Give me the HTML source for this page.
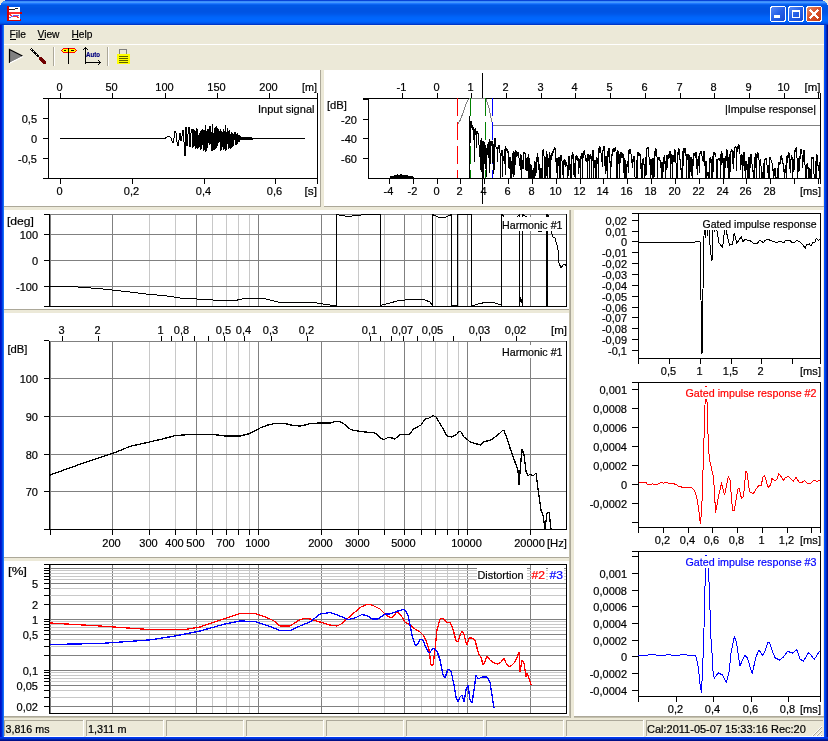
<!DOCTYPE html>
<html><head><meta charset="utf-8"><style>
html,body{margin:0;padding:0;width:828px;height:741px;overflow:hidden;background:#ECE9D8;}
svg{display:block;font-family:"Liberation Sans",sans-serif;will-change:transform;}
</style></head><body>
<svg width="828" height="741" viewBox="0 0 828 741" shape-rendering="crispEdges">
<defs>
<linearGradient id="btnBlue" x1="0" y1="0" x2="1" y2="1">
<stop offset="0" stop-color="#5A8CF8"/><stop offset="0.5" stop-color="#2660E8"/><stop offset="1" stop-color="#1848D0"/></linearGradient>
<linearGradient id="btnRed" x1="0" y1="0" x2="1" y2="1">
<stop offset="0" stop-color="#E8906A"/><stop offset="0.5" stop-color="#D8502A"/><stop offset="1" stop-color="#C03810"/></linearGradient>
</defs>
<rect x="0" y="0" width="828" height="1" fill="#0843D8" />
<rect x="0" y="1" width="828" height="1" fill="#3C8EF9" />
<rect x="0" y="2" width="828" height="1" fill="#4598FF" />
<rect x="0" y="3" width="828" height="1" fill="#1F78FF" />
<rect x="0" y="4" width="828" height="1" fill="#0A63F0" />
<rect x="0" y="5" width="828" height="1" fill="#0058E6" />
<rect x="0" y="6" width="828" height="1" fill="#0058E6" />
<rect x="0" y="7" width="828" height="1" fill="#0056E4" />
<rect x="0" y="8" width="828" height="1" fill="#0054E3" />
<rect x="0" y="9" width="828" height="1" fill="#0054E3" />
<rect x="0" y="10" width="828" height="1" fill="#0054E3" />
<rect x="0" y="11" width="828" height="1" fill="#0054E3" />
<rect x="0" y="12" width="828" height="1" fill="#0055E5" />
<rect x="0" y="13" width="828" height="1" fill="#0057E8" />
<rect x="0" y="14" width="828" height="1" fill="#005AEC" />
<rect x="0" y="15" width="828" height="1" fill="#005EF2" />
<rect x="0" y="16" width="828" height="1" fill="#0062F6" />
<rect x="0" y="17" width="828" height="1" fill="#0065FA" />
<rect x="0" y="18" width="828" height="1" fill="#0066FC" />
<rect x="0" y="19" width="828" height="1" fill="#0066FF" />
<rect x="0" y="20" width="828" height="1" fill="#0066FF" />
<rect x="0" y="21" width="828" height="1" fill="#0064FC" />
<rect x="0" y="22" width="828" height="1" fill="#005CF4" />
<rect x="0" y="23" width="828" height="1" fill="#0050E6" />
<rect x="0" y="24" width="828" height="1" fill="#0038C8" />
<rect x="0" y="25" width="1" height="716" fill="#0010C8" />
<rect x="1" y="25" width="1" height="716" fill="#0020D0" />
<rect x="2" y="25" width="1" height="716" fill="#0048E8" />
<rect x="3" y="25" width="1" height="716" fill="#1A70F8" />
<rect x="824" y="25" width="1" height="716" fill="#0050FF" />
<rect x="825" y="25" width="1" height="716" fill="#0040E0" />
<rect x="826" y="25" width="1" height="716" fill="#0028B8" />
<rect x="827" y="25" width="1" height="716" fill="#001090" />
<rect x="0" y="737" width="828" height="1" fill="#0038F0" />
<rect x="0" y="738" width="828" height="1" fill="#0034D8" />
<rect x="0" y="739" width="828" height="1" fill="#0020A8" />
<rect x="0" y="740" width="828" height="1" fill="#001088" />
<rect x="4" y="25" width="820" height="712" fill="#ECE9D8" />
<rect x="4" y="25" width="820" height="1" fill="#F4F1E4" />
<rect x="4" y="44" width="820" height="1" fill="#FFFFFF" />
<rect x="0" y="0" width="5" height="1" fill="#ECE9D8" />
<rect x="823" y="0" width="5" height="1" fill="#ECE9D8" />
<rect x="0" y="1" width="3" height="1" fill="#ECE9D8" />
<rect x="825" y="1" width="3" height="1" fill="#ECE9D8" />
<rect x="0" y="2" width="2" height="1" fill="#ECE9D8" />
<rect x="826" y="2" width="2" height="1" fill="#ECE9D8" />
<rect x="0" y="3" width="1" height="1" fill="#ECE9D8" />
<rect x="827" y="3" width="1" height="1" fill="#ECE9D8" />
<rect x="0" y="4" width="1" height="1" fill="#ECE9D8" />
<rect x="827" y="4" width="1" height="1" fill="#ECE9D8" />
<g>
<rect x="7" y="7" width="13" height="13" fill="#FFFFFF"/>
<path d="M9 10 L12 9 L15 9 L18 8" stroke="#202020" stroke-width="1" fill="none"/>
<rect x="7" y="12" width="14" height="2" fill="#FF3030"/>
<path d="M9 14 L13 17 L16 16 L19 18" stroke="#FF3030" stroke-width="1" fill="none"/>
<path d="M9 18 L13 16 L19 15" stroke="#6060FF" stroke-width="1" fill="none"/>
<rect x="7" y="6" width="1.5" height="15" fill="#D00000"/>
<rect x="7" y="19.5" width="14" height="1.5" fill="#D00000"/>
<circle cx="7.5" cy="6.8" r="1" fill="#D00000"/><circle cx="7.5" cy="13" r="1" fill="#D00000"/>
<circle cx="7.5" cy="20.2" r="1" fill="#D00000"/><circle cx="20.6" cy="20.2" r="1" fill="#D00000"/>
<circle cx="21" cy="13" r="1" fill="#D00000"/>
</g>
<rect x="770.5" y="6.5" width="15" height="15" rx="2.5" ry="2.5" fill="url(#btnBlue)" stroke="#FFFFFF" stroke-width="1"/>
<rect x="774" y="15" width="6" height="3" fill="#FFFFFF" />
<rect x="788.5" y="6.5" width="15" height="15" rx="2.5" ry="2.5" fill="url(#btnBlue)" stroke="#FFFFFF" stroke-width="1"/>
<rect x="792.5" y="10.5" width="7" height="7" fill="none" stroke="#FFFFFF" stroke-width="1"/>
<rect x="792" y="10" width="8" height="2" fill="#FFFFFF" />
<rect x="806.5" y="6.5" width="15" height="15" rx="2.5" ry="2.5" fill="url(#btnRed)" stroke="#FFFFFF" stroke-width="1"/>
<path d="M810.5 10.5 L817.5 17.5 M817.5 10.5 L810.5 17.5" stroke="#FFFFFF" stroke-width="2" stroke-linecap="square"/>
<text x="9.5" y="38" text-anchor="start" fill="#000" stroke="#000" stroke-width="0.2" font-size="11"  textLength="16.5" lengthAdjust="spacingAndGlyphs">File</text>
<text x="37.5" y="38" text-anchor="start" fill="#000" stroke="#000" stroke-width="0.2" font-size="11"  textLength="22" lengthAdjust="spacingAndGlyphs">View</text>
<text x="71.5" y="38" text-anchor="start" fill="#000" stroke="#000" stroke-width="0.2" font-size="11"  textLength="21" lengthAdjust="spacingAndGlyphs">Help</text>
<rect x="10" y="39" width="6" height="1" fill="#000"/>
<rect x="38" y="39" width="7" height="1" fill="#000"/>
<rect x="72" y="39" width="7" height="1" fill="#000"/>
<path d="M9.5 49.5 L22.5 56 L9.5 62.5 Z" fill="#808080"/>
<path d="M9.5 63 L9.5 49.5 L22.5 56" stroke="#000" stroke-width="1.2" fill="none" shape-rendering="auto"/>
<path d="M10 63 L23 56.5" stroke="#FFFFFF" stroke-width="1.2" shape-rendering="auto"/>
<path d="M31 49 L39 57" stroke="#000" stroke-width="2"/>
<path d="M31.5 49.5 L38.5 56.5" stroke="#FFFFFF" stroke-width="1" stroke-dasharray="1 1.2"/>
<path d="M40 58 L45 63" stroke="#700000" stroke-width="3" stroke-linecap="round"/>
<rect x="53" y="47" width="1" height="19" fill="#ACA899"/>
<rect x="54" y="47" width="1" height="19" fill="#FFFFFF"/>
<path d="M61.5 50.5 L63.5 48.5 L74.5 48.5 L76.5 50.5 L74.5 52.5 L63.5 52.5 Z" fill="#FFFF00" stroke="#FF0000" stroke-width="1"/>
<rect x="64" y="50" width="2" height="1" fill="#000" />
<rect x="71" y="50" width="3" height="1" fill="#000" />
<rect x="68" y="48" width="1" height="16" fill="#000"/>
<rect x="85" y="48" width="1" height="16" fill="#000"/>
<rect x="85" y="62" width="16" height="1" fill="#000"/>
<path d="M83 50 L85.5 47.5 L88 50" stroke="#000" fill="none"/>
<path d="M98 60 L100.5 62.5 L98 65" stroke="#000" fill="none"/>
<text x="86" y="57" text-anchor="start" fill="#000080" stroke="#000080" stroke-width="0.2" font-size="7" font-weight="bold" textLength="14" lengthAdjust="spacingAndGlyphs">Auto</text>
<rect x="107" y="47" width="1" height="19" fill="#ACA899"/>
<rect x="108" y="47" width="1" height="19" fill="#FFFFFF"/>
<path d="M119.5 54 L119.5 49.5 L126.5 49.5 L126.5 54" stroke="#808080" stroke-width="1.5" fill="none"/>
<rect x="117" y="54" width="13" height="10" fill="#FFFF00" />
<rect x="119" y="56" width="9" height="1" fill="#606000"/>
<rect x="119" y="58" width="9" height="1" fill="#606000"/>
<rect x="119" y="60" width="9" height="1" fill="#606000"/>
<rect x="119" y="62" width="9" height="1" fill="#606000"/>
<rect x="4" y="70" width="316" height="136" fill="#FFFFFF" />
<rect x="320" y="70" width="1" height="137" fill="#ACA899"/>
<rect x="4" y="206" width="317" height="1" fill="#ACA899"/>
<rect x="324" y="70" width="499" height="136" fill="#FFFFFF" />
<rect x="324" y="206" width="500" height="1" fill="#ACA899"/>
<rect x="4" y="210" width="565" height="99" fill="#FFFFFF" />
<rect x="4" y="309" width="567" height="1" fill="#ACA899"/>
<rect x="4" y="313" width="565" height="244" fill="#FFFFFF" />
<rect x="4" y="557" width="567" height="1" fill="#ACA899"/>
<rect x="4" y="561" width="565" height="155" fill="#FFFFFF" />
<rect x="4" y="716" width="567" height="1" fill="#ACA899"/>
<rect x="4" y="717" width="567" height="1" fill="#C4C0AC"/>
<rect x="569" y="210" width="1" height="508" fill="#C4C0AC"/>
<rect x="570" y="210" width="1" height="508" fill="#ACA899"/>
<rect x="574" y="210" width="249" height="506" fill="#FFFFFF" />
<rect x="574" y="716" width="250" height="1" fill="#ACA899"/>
<rect x="574" y="717" width="250" height="1" fill="#C4C0AC"/>
<rect x="4" y="720" width="79" height="1" fill="#ACA899"/>
<rect x="4" y="720" width="1" height="16" fill="#ACA899"/>
<rect x="83" y="720" width="1" height="17" fill="#FFFFFF"/>
<rect x="4" y="736" width="80" height="1" fill="#FFFFFF"/>
<rect x="86" y="720" width="77" height="1" fill="#ACA899"/>
<rect x="86" y="720" width="1" height="16" fill="#ACA899"/>
<rect x="163" y="720" width="1" height="17" fill="#FFFFFF"/>
<rect x="86" y="736" width="78" height="1" fill="#FFFFFF"/>
<rect x="166" y="720" width="77" height="1" fill="#ACA899"/>
<rect x="166" y="720" width="1" height="16" fill="#ACA899"/>
<rect x="243" y="720" width="1" height="17" fill="#FFFFFF"/>
<rect x="166" y="736" width="78" height="1" fill="#FFFFFF"/>
<rect x="246" y="720" width="77" height="1" fill="#ACA899"/>
<rect x="246" y="720" width="1" height="16" fill="#ACA899"/>
<rect x="323" y="720" width="1" height="17" fill="#FFFFFF"/>
<rect x="246" y="736" width="78" height="1" fill="#FFFFFF"/>
<rect x="326" y="720" width="77" height="1" fill="#ACA899"/>
<rect x="326" y="720" width="1" height="16" fill="#ACA899"/>
<rect x="403" y="720" width="1" height="17" fill="#FFFFFF"/>
<rect x="326" y="736" width="78" height="1" fill="#FFFFFF"/>
<rect x="406" y="720" width="77" height="1" fill="#ACA899"/>
<rect x="406" y="720" width="1" height="16" fill="#ACA899"/>
<rect x="483" y="720" width="1" height="17" fill="#FFFFFF"/>
<rect x="406" y="736" width="78" height="1" fill="#FFFFFF"/>
<rect x="486" y="720" width="77" height="1" fill="#ACA899"/>
<rect x="486" y="720" width="1" height="16" fill="#ACA899"/>
<rect x="563" y="720" width="1" height="17" fill="#FFFFFF"/>
<rect x="486" y="736" width="78" height="1" fill="#FFFFFF"/>
<rect x="566" y="720" width="77" height="1" fill="#ACA899"/>
<rect x="566" y="720" width="1" height="16" fill="#ACA899"/>
<rect x="643" y="720" width="1" height="17" fill="#FFFFFF"/>
<rect x="566" y="736" width="78" height="1" fill="#FFFFFF"/>
<rect x="646" y="720" width="177" height="1" fill="#ACA899"/>
<rect x="646" y="720" width="1" height="16" fill="#ACA899"/>
<rect x="646" y="736" width="178" height="1" fill="#FFFFFF"/>
<text x="5.5" y="733" text-anchor="start" fill="#000" stroke="#000" stroke-width="0.2" font-size="11"  textLength="44" lengthAdjust="spacingAndGlyphs">3,816 ms</text>
<text x="88" y="733" text-anchor="start" fill="#000" stroke="#000" stroke-width="0.2" font-size="11"  textLength="38.5" lengthAdjust="spacingAndGlyphs">1,311 m</text>
<text x="647" y="733" text-anchor="start" fill="#000" stroke="#000" stroke-width="0.2" font-size="11" >Cal:2011-05-07 15:33:16 Rec:20</text>
<path d="M812 736 L822 726" stroke="#FFFFFF" stroke-width="1"/>
<path d="M813 736 L822 727" stroke="#ACA899" stroke-width="1.2"/>
<path d="M816 736 L822 730" stroke="#FFFFFF" stroke-width="1"/>
<path d="M817 736 L822 731" stroke="#ACA899" stroke-width="1.2"/>
<path d="M820 736 L822 734" stroke="#FFFFFF" stroke-width="1"/>
<path d="M821 736 L822 735" stroke="#ACA899" stroke-width="1.2"/>
<rect x="48" y="98" width="1" height="81" fill="#000"/>
<rect x="43" y="98" width="275" height="1" fill="#000"/>
<rect x="43" y="178" width="275" height="1" fill="#000"/>
<rect x="317" y="93" width="1" height="91" fill="#000"/>
<rect x="43" y="118" width="5" height="1" fill="#000"/>
<rect x="43" y="138" width="5" height="1" fill="#000"/>
<rect x="43" y="158" width="5" height="1" fill="#000"/>
<text x="37" y="123" text-anchor="end" fill="#000" stroke="#000" stroke-width="0.2" font-size="11" >0,5</text>
<text x="37" y="143" text-anchor="end" fill="#000" stroke="#000" stroke-width="0.2" font-size="11" >0</text>
<text x="37" y="163" text-anchor="end" fill="#000" stroke="#000" stroke-width="0.2" font-size="11" >-0,5</text>
<rect x="60" y="93" width="1" height="5" fill="#000"/>
<text x="59.5" y="91" text-anchor="middle" fill="#000" stroke="#000" stroke-width="0.2" font-size="11" >0</text>
<rect x="112" y="93" width="1" height="5" fill="#000"/>
<text x="111.5" y="91" text-anchor="middle" fill="#000" stroke="#000" stroke-width="0.2" font-size="11" >50</text>
<rect x="165" y="93" width="1" height="5" fill="#000"/>
<text x="164.5" y="91" text-anchor="middle" fill="#000" stroke="#000" stroke-width="0.2" font-size="11" >100</text>
<rect x="217" y="93" width="1" height="5" fill="#000"/>
<text x="216.5" y="91" text-anchor="middle" fill="#000" stroke="#000" stroke-width="0.2" font-size="11" >150</text>
<rect x="269" y="93" width="1" height="5" fill="#000"/>
<text x="268.5" y="91" text-anchor="middle" fill="#000" stroke="#000" stroke-width="0.2" font-size="11" >200</text>
<text x="317" y="91" text-anchor="end" fill="#000" stroke="#000" stroke-width="0.2" font-size="11"  textLength="15" lengthAdjust="spacingAndGlyphs">[m]</text>
<rect x="60" y="179" width="1" height="5" fill="#000"/>
<text x="59.5" y="195" text-anchor="middle" fill="#000" stroke="#000" stroke-width="0.2" font-size="11" >0</text>
<rect x="132" y="179" width="1" height="5" fill="#000"/>
<text x="131.5" y="195" text-anchor="middle" fill="#000" stroke="#000" stroke-width="0.2" font-size="11" >0,2</text>
<rect x="204" y="179" width="1" height="5" fill="#000"/>
<text x="203.5" y="195" text-anchor="middle" fill="#000" stroke="#000" stroke-width="0.2" font-size="11" >0,4</text>
<rect x="275" y="179" width="1" height="5" fill="#000"/>
<text x="274.5" y="195" text-anchor="middle" fill="#000" stroke="#000" stroke-width="0.2" font-size="11" >0,6</text>
<text x="317" y="195" text-anchor="end" fill="#000" stroke="#000" stroke-width="0.2" font-size="11"  textLength="12.5" lengthAdjust="spacingAndGlyphs">[s]</text>
<text x="314.5" y="113" text-anchor="end" fill="#000" stroke="#000" stroke-width="0.2" font-size="11"  textLength="56.5" lengthAdjust="spacingAndGlyphs">Input signal</text>
<rect x="368" y="98" width="1" height="81" fill="#000"/>
<rect x="368" y="98" width="453" height="1" fill="#000"/>
<rect x="368" y="178" width="453" height="1" fill="#000"/>
<rect x="820" y="93" width="1" height="91" fill="#000"/>
<rect x="363" y="98" width="5" height="2" fill="#000" />
<rect x="363" y="119" width="5" height="1" fill="#000"/>
<rect x="363" y="138" width="5" height="1" fill="#000"/>
<rect x="363" y="158" width="5" height="1" fill="#000"/>
<text x="357" y="124" text-anchor="end" fill="#000" stroke="#000" stroke-width="0.2" font-size="11" >-20</text>
<text x="357" y="143" text-anchor="end" fill="#000" stroke="#000" stroke-width="0.2" font-size="11" >-40</text>
<text x="357" y="163" text-anchor="end" fill="#000" stroke="#000" stroke-width="0.2" font-size="11" >-60</text>
<text x="327" y="109" text-anchor="start" fill="#000" stroke="#000" stroke-width="0.2" font-size="11"  textLength="20" lengthAdjust="spacingAndGlyphs">[dB]</text>
<rect x="402" y="93" width="1" height="5" fill="#000"/>
<text x="401.5" y="91" text-anchor="middle" fill="#000" stroke="#000" stroke-width="0.2" font-size="11" >-1</text>
<rect x="437" y="93" width="1" height="5" fill="#000"/>
<text x="436.5" y="91" text-anchor="middle" fill="#000" stroke="#000" stroke-width="0.2" font-size="11" >0</text>
<rect x="471" y="93" width="1" height="5" fill="#000"/>
<text x="470.5" y="91" text-anchor="middle" fill="#000" stroke="#000" stroke-width="0.2" font-size="11" >1</text>
<rect x="506" y="93" width="1" height="5" fill="#000"/>
<text x="505.5" y="91" text-anchor="middle" fill="#000" stroke="#000" stroke-width="0.2" font-size="11" >2</text>
<rect x="541" y="93" width="1" height="5" fill="#000"/>
<text x="540.5" y="91" text-anchor="middle" fill="#000" stroke="#000" stroke-width="0.2" font-size="11" >3</text>
<rect x="575" y="93" width="1" height="5" fill="#000"/>
<text x="574.5" y="91" text-anchor="middle" fill="#000" stroke="#000" stroke-width="0.2" font-size="11" >4</text>
<rect x="610" y="93" width="1" height="5" fill="#000"/>
<text x="609.5" y="91" text-anchor="middle" fill="#000" stroke="#000" stroke-width="0.2" font-size="11" >5</text>
<rect x="645" y="93" width="1" height="5" fill="#000"/>
<text x="644.5" y="91" text-anchor="middle" fill="#000" stroke="#000" stroke-width="0.2" font-size="11" >6</text>
<rect x="680" y="93" width="1" height="5" fill="#000"/>
<text x="679.5" y="91" text-anchor="middle" fill="#000" stroke="#000" stroke-width="0.2" font-size="11" >7</text>
<rect x="714" y="93" width="1" height="5" fill="#000"/>
<text x="713.5" y="91" text-anchor="middle" fill="#000" stroke="#000" stroke-width="0.2" font-size="11" >8</text>
<rect x="749" y="93" width="1" height="5" fill="#000"/>
<text x="748.5" y="91" text-anchor="middle" fill="#000" stroke="#000" stroke-width="0.2" font-size="11" >9</text>
<rect x="784" y="93" width="1" height="5" fill="#000"/>
<text x="783.5" y="91" text-anchor="middle" fill="#000" stroke="#000" stroke-width="0.2" font-size="11" >10</text>
<text x="820.5" y="91" text-anchor="end" fill="#000" stroke="#000" stroke-width="0.2" font-size="11"  textLength="16" lengthAdjust="spacingAndGlyphs">[m]</text>
<rect x="389" y="179" width="1" height="5" fill="#000"/>
<text x="388.5" y="195" text-anchor="middle" fill="#000" stroke="#000" stroke-width="0.2" font-size="11" >-4</text>
<rect x="413" y="179" width="1" height="5" fill="#000"/>
<text x="412.5" y="195" text-anchor="middle" fill="#000" stroke="#000" stroke-width="0.2" font-size="11" >-2</text>
<rect x="437" y="179" width="1" height="5" fill="#000"/>
<text x="436.5" y="195" text-anchor="middle" fill="#000" stroke="#000" stroke-width="0.2" font-size="11" >0</text>
<rect x="460" y="179" width="1" height="5" fill="#000"/>
<text x="459.5" y="195" text-anchor="middle" fill="#000" stroke="#000" stroke-width="0.2" font-size="11" >2</text>
<rect x="484" y="179" width="1" height="5" fill="#000"/>
<text x="483.5" y="195" text-anchor="middle" fill="#000" stroke="#000" stroke-width="0.2" font-size="11" >4</text>
<rect x="508" y="179" width="1" height="5" fill="#000"/>
<text x="507.5" y="195" text-anchor="middle" fill="#000" stroke="#000" stroke-width="0.2" font-size="11" >6</text>
<rect x="532" y="179" width="1" height="5" fill="#000"/>
<text x="531.5" y="195" text-anchor="middle" fill="#000" stroke="#000" stroke-width="0.2" font-size="11" >8</text>
<rect x="556" y="179" width="1" height="5" fill="#000"/>
<text x="555.5" y="195" text-anchor="middle" fill="#000" stroke="#000" stroke-width="0.2" font-size="11" >10</text>
<rect x="580" y="179" width="1" height="5" fill="#000"/>
<text x="579.5" y="195" text-anchor="middle" fill="#000" stroke="#000" stroke-width="0.2" font-size="11" >12</text>
<rect x="603" y="179" width="1" height="5" fill="#000"/>
<text x="602.5" y="195" text-anchor="middle" fill="#000" stroke="#000" stroke-width="0.2" font-size="11" >14</text>
<rect x="627" y="179" width="1" height="5" fill="#000"/>
<text x="626.5" y="195" text-anchor="middle" fill="#000" stroke="#000" stroke-width="0.2" font-size="11" >16</text>
<rect x="651" y="179" width="1" height="5" fill="#000"/>
<text x="650.5" y="195" text-anchor="middle" fill="#000" stroke="#000" stroke-width="0.2" font-size="11" >18</text>
<rect x="675" y="179" width="1" height="5" fill="#000"/>
<text x="674.5" y="195" text-anchor="middle" fill="#000" stroke="#000" stroke-width="0.2" font-size="11" >20</text>
<rect x="699" y="179" width="1" height="5" fill="#000"/>
<text x="698.5" y="195" text-anchor="middle" fill="#000" stroke="#000" stroke-width="0.2" font-size="11" >22</text>
<rect x="723" y="179" width="1" height="5" fill="#000"/>
<text x="722.5" y="195" text-anchor="middle" fill="#000" stroke="#000" stroke-width="0.2" font-size="11" >24</text>
<rect x="746" y="179" width="1" height="5" fill="#000"/>
<text x="745.5" y="195" text-anchor="middle" fill="#000" stroke="#000" stroke-width="0.2" font-size="11" >26</text>
<rect x="770" y="179" width="1" height="5" fill="#000"/>
<text x="769.5" y="195" text-anchor="middle" fill="#000" stroke="#000" stroke-width="0.2" font-size="11" >28</text>
<rect x="794" y="179" width="1" height="5" fill="#000"/>
<rect x="818" y="179" width="1" height="5" fill="#000"/>
<rect x="818" y="93" width="1" height="5" fill="#000"/>
<text x="821" y="195" text-anchor="end" fill="#000" stroke="#000" stroke-width="0.2" font-size="11"  textLength="21" lengthAdjust="spacingAndGlyphs">[ms]</text>
<polyline points="60.00,138.50 165.00,138.50 167.00,137.00 169.00,136.00 171.00,138.00 172.00,141.00 173.00,143.00 174.00,138.00 175.00,131.00 176.00,133.00 177.00,142.00 178.00,146.00 179.00,140.00 180.00,133.00 181.00,141.00 182.00,136.00 183.00,130.00 184.00,142.00 185.00,156.00 185.50,140.00 186.00,127.00 187.00,146.00 188.00,134.00 189.00,127.00 190.00,147.00 191.00,133.00 192.00,129.00 193.00,148.00 193.50,129.67 194.00,145.96 194.50,130.24 195.00,145.53 195.50,131.88 196.00,149.22 196.50,128.51 197.00,143.33 197.50,129.25 198.00,148.72 198.50,135.02 199.00,147.13 199.50,133.39 200.00,147.18 200.50,131.32 201.00,149.70 201.50,130.77 202.00,143.47 202.50,129.18 203.00,145.19 203.50,130.13 204.00,151.25 204.50,130.69 205.00,147.41 205.50,125.62 206.00,151.92 206.50,131.89 207.00,148.76 207.50,129.97 208.00,143.87 208.50,129.91 209.00,143.27 209.50,126.43 210.00,144.86 210.50,126.91 211.00,143.03 211.50,132.07 212.00,151.38 212.50,124.49 213.00,150.66 213.50,133.30 214.00,148.84 214.50,128.86 215.00,149.96 215.50,127.54 216.00,149.21 216.50,126.04 217.00,147.22 217.50,128.38 218.00,143.33 218.50,129.52 219.00,142.97 219.50,131.77 220.00,142.11 220.50,129.39 221.00,150.62 221.50,131.82 222.00,142.44 222.50,132.43 223.00,147.18 223.50,129.91 224.00,150.19 224.50,131.43 225.00,147.06 225.50,125.49 226.00,150.64 226.50,132.40 227.00,141.84 227.50,128.68 228.00,143.95 228.50,131.47 229.00,149.03 229.50,130.89 230.00,143.85 230.50,134.57 231.00,148.57 231.50,132.70 232.00,148.15 232.50,133.41 233.00,146.31 233.50,134.63 234.00,140.80 234.50,132.39 235.00,140.39 235.50,132.28 236.00,144.98 236.50,134.29 237.00,144.23 237.50,133.78 238.00,142.43 238.50,135.61 239.00,142.39 239.50,135.27 240.00,139.63 240.50,136.32 241.00,139.00 241.50,137.30 242.00,139.70 242.50,137.30 243.00,139.70 243.50,137.30 244.00,139.70 244.50,137.30 245.00,139.70 245.50,137.30 246.00,139.70 246.50,137.30 247.00,139.70 247.50,137.30 248.00,139.70 248.50,137.30 249.00,139.70 249.50,137.30 250.00,139.70 250.50,137.30 251.00,139.70 251.50,137.30 252.00,139.70 252.00,138.50 305.00,138.50" fill="none" stroke="#000" stroke-width="1" stroke-linejoin="round" shape-rendering="crispEdges"/>
<polygon points="390.00,178.00 390.00,176.94 390.50,176.96 391.00,177.29 391.50,176.63 392.00,176.58 392.50,176.57 393.00,175.98 393.50,176.28 394.00,176.32 394.50,176.43 395.00,175.50 395.50,175.67 396.00,175.34 396.50,176.13 397.00,175.92 397.50,175.08 398.00,176.16 398.50,176.09 399.00,175.68 399.50,175.60 400.00,175.02 400.50,174.83 401.00,175.44 401.50,174.87 402.00,175.03 402.50,175.11 403.00,174.87 403.50,175.42 404.00,175.42 404.50,175.94 405.00,175.60 405.50,175.80 406.00,175.69 406.50,175.95 407.00,175.78 407.50,175.64 408.00,176.59 408.50,176.67 409.00,176.58 409.50,176.51 410.00,176.14 410.50,176.14 411.00,176.32 411.50,176.16 412.00,177.10 412.50,176.77 413.00,177.42 413.00,178.00" fill="#000" stroke="#000" stroke-width="1" shape-rendering="crispEdges"/>
<polyline points="457.00,125.50 458.00,124.00 460.00,120.50 463.00,113.00 466.00,104.00 468.50,99.50 470.00,98.50 485.00,98.50 486.50,100.00 489.00,108.00 491.00,118.00 492.50,124.50 493.00,125.50 820.00,125.50" fill="none" stroke="#808080" stroke-width="1" stroke-linejoin="round" shape-rendering="crispEdges"/>
<line x1="457.5" y1="98" x2="457.5" y2="178" stroke="#FF0000" stroke-width="1" stroke-dasharray="18 6"/>
<line x1="470.5" y1="98" x2="470.5" y2="178" stroke="#008000" stroke-width="1" stroke-dasharray="18 6"/>
<line x1="485.5" y1="98" x2="485.5" y2="178" stroke="#008000" stroke-width="1" stroke-dasharray="18 6"/>
<line x1="492.5" y1="98" x2="492.5" y2="178" stroke="#0000FF" stroke-width="1" stroke-dasharray="18 6"/>
<polyline points="469.00,178.00 469.00,120.00 469.00,116.04 469.25,138.62 469.50,124.18 469.75,129.25 470.00,135.52 470.25,142.47 470.50,124.83 470.75,131.44 471.00,120.84 471.25,123.23 471.50,121.47 471.75,127.42 472.00,127.63 472.25,129.53 472.50,125.50 472.75,126.58 473.00,126.36 473.25,130.95 473.50,132.52 473.75,137.06 474.00,140.32 474.25,161.67 474.50,132.28 474.75,143.50 475.00,128.63 475.25,130.45 475.50,128.94 475.75,132.54 476.00,134.59 476.25,144.51 476.50,136.34 476.75,147.12 477.00,130.87 477.25,133.42 477.50,131.27 477.75,133.00 478.00,133.41 478.25,134.78 478.50,135.66 478.75,141.55 479.00,144.60 479.25,148.37 479.50,146.37 479.75,151.04 480.00,156.96 480.25,170.03 480.50,147.72 480.75,151.80 481.00,140.24 481.25,171.76 481.50,138.35 481.75,139.00 482.00,140.22 482.25,152.81 482.50,158.81 482.75,178.00 483.00,163.47 483.25,176.73 483.50,149.72 483.75,178.00 484.00,141.45 484.25,145.56 484.50,142.56 484.75,163.37 485.00,144.93 485.25,149.66 485.50,148.61 485.75,168.57 486.00,147.46 486.25,149.75 486.50,153.10 486.75,176.89 487.00,148.62 487.25,155.04 487.50,145.64 487.75,148.02 488.00,144.21 488.25,145.37 488.50,147.10 488.75,157.67 489.00,142.35 489.25,172.86 489.50,139.33 489.75,140.33 490.00,140.57 490.25,149.80 490.50,144.47 490.75,163.92 491.00,143.31 491.25,145.28 491.50,141.87 491.75,145.81 492.00,140.77 492.25,144.04 492.50,147.51 492.75,160.39 493.00,163.35 493.25,173.59 493.50,158.21 493.75,163.09 494.00,143.75 494.25,169.72 494.50,138.11 494.75,141.13 495.00,138.29 495.25,140.83 495.50,141.90 495.75,145.33 496.00,146.50 496.25,148.12 496.50,147.72 496.75,148.14 497.00,147.28 497.25,149.28 497.50,152.33 497.75,161.97 498.00,147.11 498.25,148.88 498.50,146.92 498.75,148.18 499.00,145.05 499.25,145.98 499.50,146.03 499.75,150.88 500.00,153.29 500.25,163.13 500.50,157.29 500.75,178.00 501.00,153.19 501.25,154.52 501.50,154.51 501.75,155.23 502.00,150.12 502.25,153.14 502.50,151.18 502.75,176.91 503.00,155.64 503.25,160.49 503.50,156.25 503.75,160.12 504.00,156.23 504.25,160.37 504.50,155.52 504.75,163.20 505.00,149.15 505.25,174.50 505.50,146.49 505.75,147.37 506.00,148.11 506.25,150.59 506.50,148.93 506.75,150.35 507.00,149.03 507.25,151.49 507.50,151.25 507.75,152.49 508.00,150.69 508.25,153.11 508.50,155.69 508.75,167.31 509.00,161.98 509.25,169.07 509.50,157.56 509.75,159.44 510.00,159.31 510.25,178.00 510.50,157.92 510.75,167.54 511.00,168.04 511.25,178.00 511.50,176.13 511.75,178.00 512.00,160.94 512.25,174.06 512.50,153.92 512.75,157.74 513.00,154.88 513.25,176.49 513.50,166.91 513.75,175.64 514.00,151.35 514.25,160.93 514.50,152.01 514.75,174.58 515.00,153.67 515.25,164.70 515.50,150.92 515.75,152.60 516.00,150.85 516.25,153.87 516.50,155.38 516.75,156.24 517.00,155.46 517.25,155.66 517.50,152.58 517.75,154.85 518.00,152.42 518.25,153.93 518.50,154.57 518.75,156.87 519.00,158.20 519.25,160.85 519.50,160.75 519.75,163.77 520.00,166.03 520.25,169.77 520.50,154.42 520.75,161.64 521.00,154.20 521.25,163.13 521.50,159.49 521.75,178.00 522.00,159.46 522.25,163.74 522.50,165.28 522.75,168.81 523.00,162.17 523.25,169.00 523.50,153.98 523.75,159.51 524.00,152.11 524.25,152.93 524.50,152.67 524.75,153.16 525.00,152.70 525.25,154.04 525.50,156.06 525.75,170.02 526.00,158.05 526.25,161.07 526.50,158.56 526.75,171.07 527.00,158.21 527.25,164.63 527.50,166.14 527.75,170.13 528.00,156.64 528.25,178.00 528.50,154.56 528.75,155.84 529.00,157.43 529.25,167.77 529.50,174.66 529.75,178.00 530.00,168.61 530.25,178.00 530.50,167.32 530.75,178.00 531.00,164.48 531.25,178.00 531.50,165.68 531.75,178.00 532.00,171.25 532.25,178.00 532.50,170.53 532.75,178.00 533.00,178.00 533.25,178.00 533.50,176.21 533.75,178.00 534.00,167.79 534.25,178.00 534.50,161.46 534.75,164.97 535.00,161.69 535.25,168.52 535.50,172.65 535.75,175.77 536.00,170.93 536.25,172.71 536.50,163.63 536.75,169.24 537.00,156.51 537.25,162.02 537.50,153.87 537.75,155.01 538.00,156.08 538.25,166.83 538.50,163.62 538.75,169.64 539.00,163.08 539.25,177.33 539.50,178.00 539.75,178.00 540.00,173.23 540.25,178.00 540.50,176.89 540.75,178.00 541.00,168.07 541.25,177.15 541.50,168.03 541.75,178.00 542.00,168.50 542.25,178.00 542.50,157.83 542.75,165.71 543.00,150.39 543.25,155.35 543.50,149.98 543.75,152.95 544.00,155.13 544.25,163.94 544.50,168.16 544.75,178.00 545.00,167.84 545.25,178.00 545.50,162.94 545.75,165.87 546.00,156.75 546.25,175.38 546.50,151.98 546.75,154.09 547.00,153.11 547.25,162.09 547.50,166.46 547.75,178.00 548.00,164.48 548.25,166.82 548.50,160.40 548.75,162.23 549.00,158.10 549.25,178.00 549.50,152.76 549.75,154.97 550.00,154.53 550.25,167.24 550.50,161.02 550.75,178.00 551.00,157.63 551.25,159.47 551.50,156.36 551.75,157.53 552.00,152.76 552.25,155.25 552.50,152.78 552.75,153.26 553.00,151.52 553.25,152.87 553.50,150.26 553.75,151.14 554.00,149.55 554.25,150.09 554.50,147.86 554.75,149.17 555.00,147.75 555.25,149.58 555.50,151.04 555.75,158.29 556.00,161.84 556.25,172.85 556.50,159.73 556.75,170.38 557.00,158.32 557.25,161.83 557.50,166.13 557.75,178.00 558.00,158.35 558.25,165.75 558.50,157.49 558.75,165.68 559.00,157.44 559.25,178.00 559.50,157.69 559.75,163.67 560.00,165.41 560.25,171.89 560.50,160.33 560.75,178.00 561.00,155.32 561.25,157.82 561.50,155.67 561.75,159.22 562.00,160.79 562.25,164.82 562.50,166.05 562.75,170.88 563.00,174.71 563.25,178.00 563.50,169.18 563.75,178.00 564.00,159.76 564.25,164.85 564.50,159.43 564.75,159.75 565.00,160.01 565.25,162.11 565.50,163.44 565.75,166.36 566.00,163.02 566.25,165.78 566.50,162.36 566.75,162.70 567.00,163.79 567.25,178.00 567.50,170.61 567.75,176.80 568.00,170.92 568.25,176.05 568.50,157.47 568.75,166.16 569.00,156.16 569.25,157.55 569.50,159.16 569.75,166.79 570.00,170.10 570.25,178.00 570.50,169.93 570.75,175.94 571.00,163.58 571.25,178.00 571.50,159.24 571.75,162.07 572.00,154.64 572.25,158.24 572.50,152.47 572.75,153.55 573.00,153.47 573.25,159.21 573.50,162.41 573.75,175.04 574.00,169.61 574.25,176.86 574.50,163.94 574.75,166.84 575.00,167.14 575.25,178.00 575.50,160.86 575.75,167.16 576.00,155.63 576.25,158.96 576.50,155.64 576.75,158.63 577.00,159.42 577.25,160.62 577.50,156.18 577.75,158.03 578.00,157.52 578.25,167.51 578.50,167.08 578.75,173.71 579.00,158.93 579.25,163.68 579.50,159.10 579.75,167.48 580.00,162.27 580.25,178.00 580.50,159.47 580.75,160.77 581.00,155.71 581.25,158.91 581.50,153.55 581.75,154.75 582.00,153.87 582.25,159.30 582.50,160.51 582.75,178.00 583.00,153.12 583.25,157.10 583.50,153.02 583.75,153.38 584.00,150.83 584.25,152.71 584.50,150.91 584.75,153.45 585.00,154.71 585.25,158.98 585.50,159.12 585.75,160.46 586.00,157.85 586.25,158.39 586.50,158.96 586.75,160.16 587.00,161.90 587.25,178.00 587.50,156.75 587.75,161.60 588.00,154.29 588.25,156.14 588.50,154.11 588.75,157.76 589.00,161.16 589.25,178.00 589.50,161.72 589.75,173.89 590.00,154.89 590.25,158.89 590.50,154.89 590.75,156.75 591.00,157.62 591.25,162.92 591.50,164.19 591.75,178.00 592.00,156.08 592.25,160.94 592.50,150.44 592.75,154.56 593.00,149.84 593.25,152.25 593.50,154.97 593.75,178.00 594.00,162.43 594.25,167.58 594.50,160.04 594.75,161.97 595.00,159.99 595.25,165.26 595.50,169.88 595.75,178.00 596.00,168.45 596.25,178.00 596.50,157.97 596.75,163.32 597.00,158.02 597.25,159.05 597.50,159.50 597.75,162.52 598.00,163.81 598.25,173.35 598.50,155.40 598.75,178.00 599.00,147.85 599.25,152.52 599.50,146.34 599.75,147.05 600.00,147.18 600.25,150.48 600.50,151.17 600.75,152.07 601.00,153.03 601.25,158.66 601.50,159.83 601.75,160.11 602.00,161.41 602.25,166.48 602.50,152.31 602.75,162.90 603.00,149.90 603.25,150.79 603.50,147.28 603.75,149.81 604.00,145.82 604.25,146.63 604.50,148.36 604.75,165.32 605.00,159.18 605.25,173.43 605.50,156.62 605.75,158.46 606.00,156.07 606.25,160.02 606.50,159.15 606.75,171.05 607.00,159.33 607.25,173.54 607.50,160.06 607.75,178.00 608.00,151.04 608.25,156.30 608.50,148.96 608.75,150.32 609.00,148.12 609.25,148.55 609.50,149.51 609.75,158.59 610.00,162.66 610.25,178.00 610.50,161.25 610.75,164.18 611.00,162.89 611.25,166.54 611.50,154.85 611.75,160.03 612.00,154.58 612.25,155.09 612.50,151.93 612.75,154.58 613.00,149.16 613.25,151.17 613.50,148.70 613.75,149.35 614.00,149.92 614.25,151.12 614.50,149.31 614.75,150.98 615.00,147.95 615.25,148.75 615.50,148.01 615.75,149.61 616.00,150.98 616.25,160.01 616.50,164.76 616.75,178.00 617.00,155.80 617.25,177.62 617.50,150.21 617.75,153.11 618.00,150.61 618.25,155.18 618.50,157.48 618.75,162.78 619.00,163.54 619.25,169.79 619.50,169.35 619.75,178.00 620.00,154.06 620.25,162.78 620.50,152.46 620.75,153.17 621.00,152.44 621.25,153.58 621.50,154.46 621.75,157.20 622.00,154.28 622.25,157.11 622.50,153.50 622.75,153.73 623.00,153.88 623.25,155.55 623.50,157.68 623.75,173.05 624.00,157.61 624.25,161.38 624.50,160.97 624.75,178.00 625.00,159.80 625.25,161.49 625.50,164.83 625.75,178.00 626.00,174.21 626.25,178.00 626.50,166.34 626.75,178.00 627.00,164.15 627.25,166.11 627.50,161.34 627.75,166.31 628.00,160.59 628.25,173.05 628.50,155.46 628.75,171.25 629.00,150.37 629.25,153.69 629.50,149.41 629.75,149.81 630.00,149.51 630.25,149.96 630.50,150.41 630.75,152.90 631.00,153.85 631.25,156.52 631.50,157.50 631.75,161.05 632.00,162.71 632.25,167.68 632.50,162.54 632.75,167.13 633.00,159.35 633.25,161.74 633.50,156.30 633.75,158.24 634.00,156.31 634.25,157.95 634.50,159.33 634.75,169.69 635.00,177.14 635.25,178.00 635.50,178.00 635.75,178.00 636.00,178.00 636.25,178.00 636.50,178.00 636.75,178.00 637.00,159.95 637.25,178.00 637.50,152.09 637.75,156.40 638.00,152.09 638.25,153.46 638.50,153.82 638.75,155.00 639.00,155.45 639.25,155.76 639.50,153.96 639.75,155.18 640.00,153.81 640.25,157.07 640.50,160.07 640.75,168.26 641.00,162.33 641.25,166.02 641.50,164.33 641.75,178.00 642.00,176.73 642.25,178.00 642.50,168.30 642.75,175.10 643.00,158.56 643.25,164.97 643.50,158.24 643.75,162.66 644.00,165.19 644.25,178.00 644.50,166.61 644.75,178.00 645.00,163.87 645.25,166.23 645.50,163.51 645.75,175.57 646.00,156.53 646.25,174.35 646.50,149.68 646.75,154.19 647.00,148.15 647.25,148.90 647.50,147.35 647.75,148.04 648.00,147.26 648.25,148.55 648.50,149.60 648.75,154.72 649.00,156.92 649.25,160.44 649.50,160.22 649.75,162.78 650.00,165.34 650.25,172.67 650.50,163.50 650.75,178.00 651.00,158.72 651.25,160.52 651.50,161.24 651.75,174.98 652.00,161.53 652.25,166.02 652.50,163.17 652.75,178.00 653.00,158.28 653.25,161.43 653.50,162.51 653.75,178.00 654.00,174.58 654.25,176.90 654.50,158.28 654.75,171.98 655.00,151.05 655.25,155.80 655.50,148.72 655.75,149.95 656.00,149.02 656.25,151.16 656.50,152.13 656.75,155.34 657.00,156.70 657.25,167.56 657.50,159.81 657.75,178.00 658.00,158.53 658.25,159.18 658.50,159.35 658.75,159.84 659.00,157.44 659.25,158.73 659.50,157.61 659.75,160.00 660.00,161.01 660.25,161.79 660.50,161.01 660.75,164.15 661.00,168.45 661.25,178.00 661.50,164.88 661.75,178.00 662.00,162.04 662.25,163.80 662.50,166.63 662.75,178.00 663.00,168.97 663.25,171.00 663.50,166.70 663.75,171.22 664.00,156.71 664.25,163.43 664.50,155.48 664.75,156.86 665.00,158.89 665.25,177.40 665.50,163.07 665.75,166.46 666.00,165.77 666.25,169.43 666.50,155.39 666.75,161.68 667.00,155.52 667.25,162.68 667.50,161.72 667.75,167.69 668.00,154.60 668.25,158.61 668.50,154.84 668.75,156.98 669.00,156.59 669.25,157.12 669.50,152.69 669.75,156.09 670.00,151.28 670.25,152.52 670.50,154.47 670.75,178.00 671.00,154.52 671.25,163.19 671.50,154.39 671.75,158.76 672.00,161.45 672.25,168.02 672.50,164.15 672.75,178.00 673.00,155.48 673.25,159.53 673.50,156.33 673.75,161.45 674.00,155.14 674.25,161.64 674.50,149.32 674.75,152.77 675.00,149.46 675.25,152.96 675.50,155.06 675.75,161.94 676.00,163.00 676.25,165.26 676.50,167.94 676.75,178.00 677.00,163.72 677.25,178.00 677.50,154.62 677.75,164.94 678.00,152.33 678.25,154.13 678.50,148.90 678.75,151.28 679.00,148.70 679.25,151.43 679.50,153.64 679.75,159.65 680.00,159.36 680.25,160.04 680.50,161.59 680.75,169.04 681.00,170.01 681.25,171.61 681.50,174.98 681.75,178.00 682.00,167.53 682.25,174.04 682.50,165.59 682.75,178.00 683.00,150.79 683.25,165.44 683.50,148.43 683.75,149.25 684.00,149.60 684.25,152.01 684.50,149.38 684.75,152.08 685.00,147.98 685.25,148.79 685.50,150.01 685.75,154.43 686.00,155.58 686.25,161.13 686.50,159.74 686.75,178.00 687.00,154.00 687.25,156.87 687.50,154.05 687.75,158.72 688.00,159.64 688.25,178.00 688.50,154.41 688.75,156.87 689.00,154.99 689.25,163.48 689.50,172.17 689.75,178.00 690.00,158.17 690.25,172.03 690.50,157.22 690.75,157.65 691.00,157.71 691.25,157.91 691.50,158.07 691.75,166.88 692.00,175.98 692.25,178.00 692.50,168.25 692.75,177.58 693.00,159.35 693.25,166.01 693.50,153.64 693.75,157.43 694.00,152.93 694.25,153.14 694.50,153.36 694.75,155.16 695.00,156.11 695.25,157.61 695.50,153.73 695.75,157.04 696.00,151.73 696.25,152.68 696.50,153.49 696.75,168.77 697.00,159.74 697.25,175.09 697.50,159.62 697.75,164.26 698.00,161.13 698.25,165.94 698.50,156.94 698.75,158.86 699.00,159.47 699.25,172.71 699.50,154.89 699.75,163.24 700.00,153.49 700.25,153.98 700.50,151.94 700.75,153.35 701.00,151.53 701.25,152.22 701.50,152.90 701.75,155.16 702.00,155.81 702.25,157.84 702.50,158.58 702.75,160.89 703.00,160.40 703.25,161.74 703.50,154.08 703.75,159.05 704.00,150.87 704.25,152.58 704.50,151.75 704.75,160.74 705.00,165.79 705.25,177.95 705.50,165.90 705.75,175.52 706.00,161.12 706.25,163.90 706.50,168.74 706.75,178.00 707.00,172.17 707.25,175.84 707.50,173.20 707.75,174.96 708.00,175.10 708.25,178.00 708.50,178.00 708.75,178.00 709.00,171.60 709.25,178.00 709.50,165.17 709.75,170.75 710.00,158.12 710.25,162.50 710.50,157.79 710.75,160.38 711.00,163.34 711.25,178.00 711.50,159.10 711.75,164.89 712.00,158.91 712.25,163.27 712.50,167.48 712.75,178.00 713.00,155.72 713.25,171.51 713.50,152.46 713.75,154.06 714.00,152.02 714.25,152.26 714.50,152.57 714.75,155.05 715.00,153.86 715.25,155.49 715.50,153.10 715.75,154.65 716.00,156.61 716.25,178.00 716.50,163.73 716.75,171.55 717.00,164.73 717.25,178.00 717.50,160.85 717.75,177.18 718.00,158.86 718.25,159.44 718.50,158.78 718.75,159.50 719.00,158.58 719.25,160.12 719.50,159.02 719.75,160.64 720.00,158.50 720.25,163.98 720.50,170.62 720.75,178.00 721.00,153.52 721.25,164.40 721.50,151.58 721.75,152.20 722.00,152.78 722.25,156.04 722.50,157.02 722.75,160.08 723.00,162.91 723.25,178.00 723.50,161.05 723.75,178.00 724.00,158.25 724.25,160.72 724.50,163.84 724.75,178.00 725.00,160.70 725.25,167.41 725.50,160.11 725.75,160.43 726.00,156.27 726.25,160.35 726.50,149.87 726.75,153.95 727.00,150.07 727.25,154.70 727.50,156.93 727.75,164.47 728.00,168.47 728.25,178.00 728.50,165.01 728.75,171.54 729.00,156.78 729.25,178.00 729.50,154.41 729.75,155.87 730.00,158.55 730.25,171.62 730.50,152.98 730.75,165.63 731.00,150.53 731.25,151.63 731.50,150.00 731.75,150.37 732.00,149.96 732.25,151.52 732.50,153.30 732.75,162.46 733.00,164.25 733.25,166.47 733.50,160.75 733.75,168.17 734.00,150.99 734.25,157.24 734.50,147.53 734.75,149.70 735.00,147.45 735.25,147.68 735.50,146.89 735.75,147.33 736.00,148.13 736.25,157.91 736.50,153.66 736.75,170.67 737.00,147.02 737.25,151.12 737.50,146.78 737.75,147.96 738.00,146.51 738.25,148.14 738.50,144.50 738.75,145.73 739.00,144.57 739.25,146.14 739.50,147.06 739.75,151.11 740.00,153.61 740.25,169.89 740.50,158.69 740.75,161.31 741.00,154.62 741.25,158.57 741.50,154.45 741.75,161.76 742.00,165.39 742.25,170.76 742.50,163.14 742.75,178.00 743.00,155.15 743.25,165.89 743.50,152.02 743.75,153.97 744.00,152.08 744.25,154.64 744.50,156.19 744.75,165.24 745.00,171.23 745.25,178.00 745.50,173.30 745.75,178.00 746.00,161.20 746.25,167.38 746.50,161.86 746.75,169.36 747.00,165.76 747.25,178.00 747.50,164.22 747.75,174.43 748.00,165.75 748.25,178.00 748.50,159.64 748.75,175.18 749.00,157.49 749.25,160.04 749.50,162.52 749.75,178.00 750.00,156.80 750.25,167.90 750.50,154.23 750.75,155.61 751.00,153.94 751.25,154.52 751.50,155.44 751.75,161.21 752.00,163.56 752.25,166.89 752.50,166.20 752.75,167.73 753.00,171.56 753.25,178.00 753.50,170.28 753.75,178.00 754.00,171.88 754.25,178.00 754.50,170.72 754.75,178.00 755.00,156.90 755.25,168.10 755.50,153.61 755.75,155.54 756.00,153.58 756.25,158.30 756.50,160.64 756.75,178.00 757.00,154.42 757.25,158.04 757.50,152.59 757.75,153.55 758.00,153.15 758.25,155.79 758.50,156.89 758.75,159.78 759.00,160.26 759.25,163.79 759.50,167.76 759.75,177.75 760.00,160.78 760.25,165.27 760.50,159.93 760.75,162.28 761.00,165.54 761.25,178.00 761.50,178.00 761.75,178.00 762.00,171.66 762.25,176.00 762.50,173.47 762.75,178.00 763.00,178.00 763.25,178.00 763.50,178.00 763.75,178.00 764.00,162.75 764.25,177.11 764.50,159.11 764.75,161.05 765.00,158.91 765.25,159.48 765.50,159.05 765.75,159.82 766.00,158.02 766.25,158.52 766.50,158.70 766.75,162.58 767.00,164.71 767.25,171.58 767.50,168.69 767.75,172.95 768.00,164.95 768.25,166.51 768.50,167.75 768.75,178.00 769.00,164.63 769.25,178.00 769.50,157.89 769.75,162.02 770.00,157.51 770.25,158.30 770.50,158.80 770.75,159.66 771.00,159.77 771.25,160.06 771.50,160.23 771.75,161.86 772.00,163.15 772.25,168.92 772.50,169.01 772.75,170.11 773.00,168.89 773.25,173.80 773.50,171.69 773.75,178.00 774.00,169.49 774.25,172.64 774.50,171.52 774.75,175.23 775.00,168.50 775.25,169.71 775.50,170.63 775.75,178.00 776.00,177.07 776.25,178.00 776.50,178.00 776.75,178.00 777.00,178.00 777.25,178.00 777.50,169.54 777.75,178.00 778.00,168.29 778.25,178.00 778.50,164.91 778.75,178.00 779.00,162.26 779.25,163.32 779.50,163.37 779.75,164.45 780.00,163.47 780.25,163.84 780.50,161.62 780.75,163.95 781.00,155.59 781.25,159.81 781.50,155.11 781.75,156.31 782.00,157.33 782.25,160.90 782.50,161.81 782.75,163.13 783.00,163.45 783.25,164.16 783.50,164.49 783.75,170.76 784.00,171.93 784.25,178.00 784.50,172.37 784.75,178.00 785.00,169.08 785.25,173.09 785.50,165.03 785.75,168.34 786.00,164.62 786.25,167.71 786.50,168.21 786.75,178.00 787.00,156.21 787.25,162.91 787.50,155.39 787.75,156.24 788.00,157.06 788.25,157.84 788.50,152.57 788.75,155.71 789.00,152.51 789.25,155.25 789.50,157.21 789.75,167.48 790.00,168.85 790.25,172.29 790.50,160.66 790.75,166.42 791.00,158.70 791.25,159.76 791.50,155.86 791.75,157.94 792.00,156.30 792.25,162.93 792.50,166.78 792.75,178.00 793.00,160.90 793.25,171.60 793.50,159.79 793.75,161.09 794.00,162.87 794.25,169.54 794.50,153.41 794.75,165.51 795.00,149.51 795.25,151.58 795.50,148.17 795.75,149.21 796.00,147.63 796.25,147.97 796.50,148.76 796.75,154.52 797.00,157.72 797.25,171.24 797.50,163.06 797.75,178.00 798.00,158.33 798.25,160.32 798.50,160.56 798.75,171.28 799.00,160.24 799.25,170.80 799.50,158.54 799.75,158.91 800.00,156.45 800.25,158.35 800.50,153.53 800.75,156.20 801.00,149.15 801.25,151.97 801.50,149.16 801.75,152.29 802.00,154.43 802.25,163.70 802.50,163.61 802.75,167.37 803.00,156.97 803.25,161.22 803.50,151.85 803.75,155.91 804.00,150.16 804.25,150.80 804.50,151.75 804.75,159.35 805.00,164.59 805.25,178.00 805.50,177.20 805.75,178.00 806.00,168.75 806.25,178.00 806.50,169.33 806.75,178.00 807.00,164.46 807.25,168.83 807.50,163.81 807.75,165.15 808.00,167.78 808.25,178.00 808.50,167.22 808.75,168.94 809.00,169.49 809.25,178.00 809.50,171.93 809.75,178.00 810.00,168.46 810.25,173.46 810.50,178.00 810.75,178.00 811.00,175.13 811.25,178.00 811.50,159.18 811.75,169.18 812.00,157.02 812.25,157.78 812.50,158.05 812.75,158.56 813.00,157.31 813.25,158.93 813.50,160.88 813.75,170.86 814.00,174.12 814.25,175.75 814.50,175.94 814.75,178.00 815.00,178.00 815.25,178.00 815.50,176.79 815.75,178.00 816.00,160.66 816.25,178.00 816.50,154.81 816.75,158.14 817.00,154.56 817.25,156.24 817.50,157.84 817.75,165.13 818.00,166.06 818.25,167.74 818.50,165.05 818.75,167.91 819.00,171.44 819.25,178.00 819.50,162.39 819.75,172.09" fill="none" stroke="#000" stroke-width="1" stroke-linejoin="round" shape-rendering="crispEdges"/>
<rect x="482" y="73" width="1" height="25" fill="#000"/>
<rect x="482" y="179" width="1" height="25" fill="#000"/>
<text x="816" y="113" text-anchor="end" fill="#000" stroke="#000" stroke-width="0.2" font-size="11"  textLength="91" lengthAdjust="spacingAndGlyphs">|Impulse response|</text>
<rect x="50" y="214" width="1" height="93" fill="#808080"/>
<rect x="112" y="214" width="1" height="93" fill="#808080"/>
<rect x="149" y="214" width="1" height="93" fill="#C8C8C8"/>
<rect x="175" y="214" width="1" height="93" fill="#C8C8C8"/>
<rect x="196" y="214" width="1" height="93" fill="#808080"/>
<rect x="212" y="214" width="1" height="93" fill="#C8C8C8"/>
<rect x="226" y="214" width="1" height="93" fill="#C8C8C8"/>
<rect x="238" y="214" width="1" height="93" fill="#C8C8C8"/>
<rect x="249" y="214" width="1" height="93" fill="#C8C8C8"/>
<rect x="258" y="214" width="1" height="93" fill="#808080"/>
<rect x="321" y="214" width="1" height="93" fill="#808080"/>
<rect x="358" y="214" width="1" height="93" fill="#C8C8C8"/>
<rect x="384" y="214" width="1" height="93" fill="#C8C8C8"/>
<rect x="404" y="214" width="1" height="93" fill="#808080"/>
<rect x="421" y="214" width="1" height="93" fill="#C8C8C8"/>
<rect x="435" y="214" width="1" height="93" fill="#C8C8C8"/>
<rect x="447" y="214" width="1" height="93" fill="#C8C8C8"/>
<rect x="458" y="214" width="1" height="93" fill="#C8C8C8"/>
<rect x="467" y="214" width="1" height="93" fill="#808080"/>
<rect x="530" y="214" width="1" height="93" fill="#808080"/>
<rect x="50" y="234" width="517" height="1" fill="#808080"/>
<rect x="50" y="260" width="517" height="1" fill="#808080"/>
<rect x="50" y="286" width="517" height="1" fill="#808080"/>
<rect x="50" y="214" width="517" height="1" fill="#808080"/>
<rect x="49" y="214" width="1" height="93" fill="#000"/>
<rect x="49" y="306" width="518" height="1" fill="#000"/>
<rect x="44" y="214" width="5" height="1" fill="#000"/>
<rect x="44" y="234" width="5" height="1" fill="#000"/>
<rect x="44" y="260" width="5" height="1" fill="#000"/>
<rect x="44" y="286" width="5" height="1" fill="#000"/>
<rect x="44" y="306" width="5" height="1" fill="#000"/>
<text x="38" y="239" text-anchor="end" fill="#000" stroke="#000" stroke-width="0.2" font-size="11" >100</text>
<text x="38" y="265" text-anchor="end" fill="#000" stroke="#000" stroke-width="0.2" font-size="11" >0</text>
<text x="38" y="291" text-anchor="end" fill="#000" stroke="#000" stroke-width="0.2" font-size="11" >-100</text>
<text x="7" y="224.5" text-anchor="start" fill="#000" stroke="#000" stroke-width="0.2" font-size="11"  textLength="27" lengthAdjust="spacingAndGlyphs">[deg]</text>
<polyline points="50.00,286.50 78.00,287.00 98.00,288.50 112.00,290.00 130.00,292.00 150.00,294.50 164.00,295.50 180.00,298.00 205.00,299.50 220.00,300.50 235.00,300.50 240.00,299.50 245.00,298.00 262.00,298.00 270.00,300.00 280.00,302.50 300.00,303.00 305.00,302.00 310.00,302.00 320.00,303.50 330.00,305.00 336.50,305.50 336.50,214.50 345.00,216.00 347.00,217.00 352.00,216.00 365.00,214.50 380.50,214.50 380.50,305.50 390.00,303.00 397.00,301.00 405.00,300.00 420.00,299.00 425.00,300.00 430.00,302.00 432.50,305.50 432.50,214.50 440.00,218.00 445.00,217.50 451.50,214.50 451.50,305.50 457.50,305.50 457.50,214.50 470.00,215.00 471.50,214.50 471.50,305.50 475.00,305.00 480.00,303.50 485.00,302.50 495.00,303.00 500.00,304.50 501.50,305.50 501.50,214.50 502.50,214.50 505.00,219.00 510.00,224.00 515.00,222.00 518.00,216.00 519.50,214.50 519.50,305.50 520.50,298.00 521.50,300.00 522.50,305.50 522.50,214.50 527.00,217.00 529.00,218.50 533.00,225.00 538.00,231.00 541.00,232.00 544.00,226.00 546.50,214.50 546.50,305.50 547.50,305.50 547.50,214.50 548.50,216.00 549.00,218.00 551.00,231.00 553.00,237.00 555.00,238.00 557.00,245.00 558.00,250.00 559.00,263.00 561.00,268.00 563.00,265.00 565.00,264.00 566.00,266.00" fill="none" stroke="#000" stroke-width="1.0" stroke-linejoin="round" shape-rendering="crispEdges"/>
<rect x="503" y="217" width="61" height="14" fill="#FFFFFF" />
<text x="562.5" y="229" text-anchor="end" fill="#000" stroke="#000" stroke-width="0.2" font-size="11"  textLength="60.5" lengthAdjust="spacingAndGlyphs">Harmonic #1</text>
<rect x="566" y="214" width="1" height="93" fill="#000"/>
<rect x="50" y="341" width="1" height="189" fill="#808080"/>
<rect x="112" y="341" width="1" height="189" fill="#808080"/>
<rect x="149" y="341" width="1" height="189" fill="#C8C8C8"/>
<rect x="175" y="341" width="1" height="189" fill="#C8C8C8"/>
<rect x="196" y="341" width="1" height="189" fill="#808080"/>
<rect x="212" y="341" width="1" height="189" fill="#C8C8C8"/>
<rect x="226" y="341" width="1" height="189" fill="#C8C8C8"/>
<rect x="238" y="341" width="1" height="189" fill="#C8C8C8"/>
<rect x="249" y="341" width="1" height="189" fill="#C8C8C8"/>
<rect x="258" y="341" width="1" height="189" fill="#808080"/>
<rect x="321" y="341" width="1" height="189" fill="#808080"/>
<rect x="358" y="341" width="1" height="189" fill="#C8C8C8"/>
<rect x="384" y="341" width="1" height="189" fill="#C8C8C8"/>
<rect x="404" y="341" width="1" height="189" fill="#808080"/>
<rect x="421" y="341" width="1" height="189" fill="#C8C8C8"/>
<rect x="435" y="341" width="1" height="189" fill="#C8C8C8"/>
<rect x="447" y="341" width="1" height="189" fill="#C8C8C8"/>
<rect x="458" y="341" width="1" height="189" fill="#C8C8C8"/>
<rect x="467" y="341" width="1" height="189" fill="#808080"/>
<rect x="530" y="341" width="1" height="189" fill="#808080"/>
<rect x="50" y="378" width="517" height="1" fill="#808080"/>
<rect x="50" y="416" width="517" height="1" fill="#808080"/>
<rect x="50" y="454" width="517" height="1" fill="#808080"/>
<rect x="50" y="491" width="517" height="1" fill="#808080"/>
<rect x="50" y="341" width="517" height="1" fill="#808080"/>
<rect x="49" y="341" width="1" height="189" fill="#000"/>
<rect x="49" y="529" width="518" height="1" fill="#000"/>
<rect x="44" y="340" width="5" height="1" fill="#000"/>
<rect x="44" y="378" width="5" height="1" fill="#000"/>
<rect x="44" y="416" width="5" height="1" fill="#000"/>
<rect x="44" y="454" width="5" height="1" fill="#000"/>
<rect x="44" y="491" width="5" height="1" fill="#000"/>
<rect x="44" y="529" width="5" height="1" fill="#000"/>
<text x="38" y="383" text-anchor="end" fill="#000" stroke="#000" stroke-width="0.2" font-size="11" >100</text>
<text x="38" y="421" text-anchor="end" fill="#000" stroke="#000" stroke-width="0.2" font-size="11" >90</text>
<text x="38" y="459" text-anchor="end" fill="#000" stroke="#000" stroke-width="0.2" font-size="11" >80</text>
<text x="38" y="496" text-anchor="end" fill="#000" stroke="#000" stroke-width="0.2" font-size="11" >70</text>
<text x="7.5" y="353" text-anchor="start" fill="#000" stroke="#000" stroke-width="0.2" font-size="11"  textLength="20" lengthAdjust="spacingAndGlyphs">[dB]</text>
<rect x="50" y="530" width="1" height="5" fill="#000"/>
<rect x="112" y="530" width="1" height="5" fill="#000"/>
<rect x="149" y="530" width="1" height="5" fill="#000"/>
<rect x="175" y="530" width="1" height="5" fill="#000"/>
<rect x="196" y="530" width="1" height="5" fill="#000"/>
<rect x="212" y="530" width="1" height="5" fill="#000"/>
<rect x="226" y="530" width="1" height="5" fill="#000"/>
<rect x="238" y="530" width="1" height="5" fill="#000"/>
<rect x="249" y="530" width="1" height="5" fill="#000"/>
<rect x="258" y="530" width="1" height="5" fill="#000"/>
<rect x="321" y="530" width="1" height="5" fill="#000"/>
<rect x="358" y="530" width="1" height="5" fill="#000"/>
<rect x="384" y="530" width="1" height="5" fill="#000"/>
<rect x="404" y="530" width="1" height="5" fill="#000"/>
<rect x="421" y="530" width="1" height="5" fill="#000"/>
<rect x="435" y="530" width="1" height="5" fill="#000"/>
<rect x="447" y="530" width="1" height="5" fill="#000"/>
<rect x="458" y="530" width="1" height="5" fill="#000"/>
<rect x="467" y="530" width="1" height="5" fill="#000"/>
<rect x="530" y="530" width="1" height="5" fill="#000"/>
<text x="111.5" y="547" text-anchor="middle" fill="#000" stroke="#000" stroke-width="0.2" font-size="11" >200</text>
<text x="148.5" y="547" text-anchor="middle" fill="#000" stroke="#000" stroke-width="0.2" font-size="11" >300</text>
<text x="174.5" y="547" text-anchor="middle" fill="#000" stroke="#000" stroke-width="0.2" font-size="11" >400</text>
<text x="195.5" y="547" text-anchor="middle" fill="#000" stroke="#000" stroke-width="0.2" font-size="11" >500</text>
<text x="225.5" y="547" text-anchor="middle" fill="#000" stroke="#000" stroke-width="0.2" font-size="11" >700</text>
<text x="257.5" y="547" text-anchor="middle" fill="#000" stroke="#000" stroke-width="0.2" font-size="11" >1000</text>
<text x="320.5" y="547" text-anchor="middle" fill="#000" stroke="#000" stroke-width="0.2" font-size="11" >2000</text>
<text x="357.5" y="547" text-anchor="middle" fill="#000" stroke="#000" stroke-width="0.2" font-size="11" >3000</text>
<text x="403.5" y="547" text-anchor="middle" fill="#000" stroke="#000" stroke-width="0.2" font-size="11" >5000</text>
<text x="466.5" y="547" text-anchor="middle" fill="#000" stroke="#000" stroke-width="0.2" font-size="11" >10000</text>
<text x="529.5" y="547" text-anchor="middle" fill="#000" stroke="#000" stroke-width="0.2" font-size="11" >20000</text>
<text x="567" y="547" text-anchor="end" fill="#000" stroke="#000" stroke-width="0.2" font-size="11"  textLength="20" lengthAdjust="spacingAndGlyphs">[Hz]</text>
<rect x="62" y="336" width="1" height="5" fill="#000"/>
<rect x="98" y="336" width="1" height="5" fill="#000"/>
<rect x="161" y="336" width="1" height="5" fill="#000"/>
<rect x="171" y="336" width="1" height="5" fill="#000"/>
<rect x="182" y="336" width="1" height="5" fill="#000"/>
<rect x="194" y="336" width="1" height="5" fill="#000"/>
<rect x="208" y="336" width="1" height="5" fill="#000"/>
<rect x="224" y="336" width="1" height="5" fill="#000"/>
<rect x="244" y="336" width="1" height="5" fill="#000"/>
<rect x="271" y="336" width="1" height="5" fill="#000"/>
<rect x="307" y="336" width="1" height="5" fill="#000"/>
<rect x="370" y="336" width="1" height="5" fill="#000"/>
<rect x="380" y="336" width="1" height="5" fill="#000"/>
<rect x="391" y="336" width="1" height="5" fill="#000"/>
<rect x="403" y="336" width="1" height="5" fill="#000"/>
<rect x="417" y="336" width="1" height="5" fill="#000"/>
<rect x="433" y="336" width="1" height="5" fill="#000"/>
<rect x="453" y="336" width="1" height="5" fill="#000"/>
<rect x="480" y="336" width="1" height="5" fill="#000"/>
<rect x="516" y="336" width="1" height="5" fill="#000"/>
<text x="61.5" y="334" text-anchor="middle" fill="#000" stroke="#000" stroke-width="0.2" font-size="11" >3</text>
<text x="97.5" y="334" text-anchor="middle" fill="#000" stroke="#000" stroke-width="0.2" font-size="11" >2</text>
<text x="160.5" y="334" text-anchor="middle" fill="#000" stroke="#000" stroke-width="0.2" font-size="11" >1</text>
<text x="181.5" y="334" text-anchor="middle" fill="#000" stroke="#000" stroke-width="0.2" font-size="11" >0,8</text>
<text x="223.5" y="334" text-anchor="middle" fill="#000" stroke="#000" stroke-width="0.2" font-size="11" >0,5</text>
<text x="243.5" y="334" text-anchor="middle" fill="#000" stroke="#000" stroke-width="0.2" font-size="11" >0,4</text>
<text x="270.5" y="334" text-anchor="middle" fill="#000" stroke="#000" stroke-width="0.2" font-size="11" >0,3</text>
<text x="306.5" y="334" text-anchor="middle" fill="#000" stroke="#000" stroke-width="0.2" font-size="11" >0,2</text>
<text x="369.5" y="334" text-anchor="middle" fill="#000" stroke="#000" stroke-width="0.2" font-size="11" >0,1</text>
<text x="402.5" y="334" text-anchor="middle" fill="#000" stroke="#000" stroke-width="0.2" font-size="11" >0,07</text>
<text x="432.5" y="334" text-anchor="middle" fill="#000" stroke="#000" stroke-width="0.2" font-size="11" >0,05</text>
<text x="479.5" y="334" text-anchor="middle" fill="#000" stroke="#000" stroke-width="0.2" font-size="11" >0,03</text>
<text x="515.5" y="334" text-anchor="middle" fill="#000" stroke="#000" stroke-width="0.2" font-size="11" >0,02</text>
<text x="567" y="334" text-anchor="end" fill="#000" stroke="#000" stroke-width="0.2" font-size="11"  textLength="16" lengthAdjust="spacingAndGlyphs">[m]</text>
<polyline points="50.00,475.00 88.00,461.40 112.60,453.40 130.00,446.40 160.00,439.60 175.00,435.70 190.00,434.40 213.00,434.40 225.00,436.00 240.00,436.00 250.00,433.50 260.00,428.00 268.00,425.00 275.00,423.50 285.00,423.50 293.00,425.50 300.00,426.00 305.00,425.00 310.00,423.50 320.00,423.00 330.00,423.00 335.00,421.50 340.00,421.50 345.00,424.60 350.00,429.00 352.00,430.00 358.00,431.00 365.00,432.00 375.00,433.00 381.00,438.50 384.00,439.50 388.00,437.50 392.00,438.00 395.00,439.00 400.00,434.50 407.00,434.50 410.00,434.00 413.00,429.50 418.00,426.50 421.00,425.00 425.00,419.00 428.00,418.50 431.00,417.00 433.00,415.50 436.00,417.00 442.00,427.00 447.00,436.00 452.00,437.00 457.00,434.00 459.00,431.00 461.00,432.00 464.00,437.00 468.00,440.00 470.00,442.00 477.00,444.00 481.00,445.00 484.00,441.50 490.00,440.50 495.00,437.00 500.00,433.00 503.00,430.00 504.00,430.50 507.00,438.00 510.00,448.00 515.00,462.00 518.00,470.00 519.00,485.00 521.00,460.00 522.00,449.00 524.00,455.00 526.00,471.00 528.00,476.00 530.00,474.00 533.00,476.00 536.00,473.00 538.00,489.00 541.00,510.00 543.00,515.00 545.00,529.00 547.00,513.00 549.00,512.00 551.00,529.00" fill="none" stroke="#000" stroke-width="1.3" stroke-linejoin="round" shape-rendering="crispEdges"/>
<rect x="500" y="345" width="64" height="13" fill="#FFFFFF" />
<text x="562.5" y="356" text-anchor="end" fill="#000" stroke="#000" stroke-width="0.2" font-size="11"  textLength="60.5" lengthAdjust="spacingAndGlyphs">Harmonic #1</text>
<rect x="566" y="341" width="1" height="189" fill="#000"/>
<rect x="50" y="564" width="1" height="150" fill="#808080"/>
<rect x="112" y="564" width="1" height="150" fill="#808080"/>
<rect x="149" y="564" width="1" height="150" fill="#C8C8C8"/>
<rect x="175" y="564" width="1" height="150" fill="#C8C8C8"/>
<rect x="196" y="564" width="1" height="150" fill="#808080"/>
<rect x="212" y="564" width="1" height="150" fill="#C8C8C8"/>
<rect x="226" y="564" width="1" height="150" fill="#C8C8C8"/>
<rect x="238" y="564" width="1" height="150" fill="#C8C8C8"/>
<rect x="249" y="564" width="1" height="150" fill="#C8C8C8"/>
<rect x="258" y="564" width="1" height="150" fill="#808080"/>
<rect x="321" y="564" width="1" height="150" fill="#808080"/>
<rect x="358" y="564" width="1" height="150" fill="#C8C8C8"/>
<rect x="384" y="564" width="1" height="150" fill="#C8C8C8"/>
<rect x="404" y="564" width="1" height="150" fill="#808080"/>
<rect x="421" y="564" width="1" height="150" fill="#C8C8C8"/>
<rect x="435" y="564" width="1" height="150" fill="#C8C8C8"/>
<rect x="447" y="564" width="1" height="150" fill="#C8C8C8"/>
<rect x="458" y="564" width="1" height="150" fill="#C8C8C8"/>
<rect x="467" y="564" width="1" height="150" fill="#808080"/>
<rect x="530" y="564" width="1" height="150" fill="#808080"/>
<rect x="50" y="706" width="517" height="1" fill="#808080"/>
<rect x="44" y="706" width="5" height="1" fill="#000"/>
<rect x="50" y="697" width="517" height="1" fill="#C8C8C8"/>
<rect x="44" y="697" width="5" height="1" fill="#000"/>
<rect x="50" y="690" width="517" height="1" fill="#C8C8C8"/>
<rect x="44" y="690" width="5" height="1" fill="#000"/>
<rect x="50" y="685" width="517" height="1" fill="#808080"/>
<rect x="44" y="685" width="5" height="1" fill="#000"/>
<rect x="50" y="681" width="517" height="1" fill="#C8C8C8"/>
<rect x="44" y="681" width="5" height="1" fill="#000"/>
<rect x="50" y="678" width="517" height="1" fill="#C8C8C8"/>
<rect x="44" y="678" width="5" height="1" fill="#000"/>
<rect x="50" y="675" width="517" height="1" fill="#C8C8C8"/>
<rect x="44" y="675" width="5" height="1" fill="#000"/>
<rect x="50" y="672" width="517" height="1" fill="#C8C8C8"/>
<rect x="44" y="672" width="5" height="1" fill="#000"/>
<rect x="50" y="670" width="517" height="1" fill="#808080"/>
<rect x="44" y="670" width="5" height="1" fill="#000"/>
<rect x="50" y="655" width="517" height="1" fill="#808080"/>
<rect x="44" y="655" width="5" height="1" fill="#000"/>
<rect x="50" y="646" width="517" height="1" fill="#C8C8C8"/>
<rect x="44" y="646" width="5" height="1" fill="#000"/>
<rect x="50" y="639" width="517" height="1" fill="#C8C8C8"/>
<rect x="44" y="639" width="5" height="1" fill="#000"/>
<rect x="50" y="634" width="517" height="1" fill="#808080"/>
<rect x="44" y="634" width="5" height="1" fill="#000"/>
<rect x="50" y="630" width="517" height="1" fill="#C8C8C8"/>
<rect x="44" y="630" width="5" height="1" fill="#000"/>
<rect x="50" y="627" width="517" height="1" fill="#C8C8C8"/>
<rect x="44" y="627" width="5" height="1" fill="#000"/>
<rect x="50" y="624" width="517" height="1" fill="#C8C8C8"/>
<rect x="44" y="624" width="5" height="1" fill="#000"/>
<rect x="50" y="621" width="517" height="1" fill="#C8C8C8"/>
<rect x="44" y="621" width="5" height="1" fill="#000"/>
<rect x="50" y="619" width="517" height="1" fill="#808080"/>
<rect x="44" y="619" width="5" height="1" fill="#000"/>
<rect x="50" y="604" width="517" height="1" fill="#808080"/>
<rect x="44" y="604" width="5" height="1" fill="#000"/>
<rect x="50" y="595" width="517" height="1" fill="#C8C8C8"/>
<rect x="44" y="595" width="5" height="1" fill="#000"/>
<rect x="50" y="588" width="517" height="1" fill="#C8C8C8"/>
<rect x="44" y="588" width="5" height="1" fill="#000"/>
<rect x="50" y="583" width="517" height="1" fill="#808080"/>
<rect x="44" y="583" width="5" height="1" fill="#000"/>
<rect x="50" y="579" width="517" height="1" fill="#C8C8C8"/>
<rect x="44" y="579" width="5" height="1" fill="#000"/>
<rect x="50" y="576" width="517" height="1" fill="#C8C8C8"/>
<rect x="44" y="576" width="5" height="1" fill="#000"/>
<rect x="50" y="573" width="517" height="1" fill="#C8C8C8"/>
<rect x="44" y="573" width="5" height="1" fill="#000"/>
<rect x="50" y="570" width="517" height="1" fill="#C8C8C8"/>
<rect x="44" y="570" width="5" height="1" fill="#000"/>
<rect x="50" y="568" width="517" height="1" fill="#808080"/>
<rect x="44" y="568" width="5" height="1" fill="#000"/>
<rect x="44" y="564" width="523" height="1" fill="#000"/>
<rect x="49" y="713" width="518" height="1" fill="#000"/>
<rect x="49" y="564" width="1" height="150" fill="#000"/>
<rect x="566" y="564" width="1" height="150" fill="#000"/>
<text x="38" y="588" text-anchor="end" fill="#000" stroke="#000" stroke-width="0.2" font-size="11" >5</text>
<text x="38" y="609" text-anchor="end" fill="#000" stroke="#000" stroke-width="0.2" font-size="11" >2</text>
<text x="38" y="624" text-anchor="end" fill="#000" stroke="#000" stroke-width="0.2" font-size="11" >1</text>
<text x="38" y="639" text-anchor="end" fill="#000" stroke="#000" stroke-width="0.2" font-size="11" >0,5</text>
<text x="38" y="675" text-anchor="end" fill="#000" stroke="#000" stroke-width="0.2" font-size="11" >0,1</text>
<text x="38" y="690" text-anchor="end" fill="#000" stroke="#000" stroke-width="0.2" font-size="11" >0,05</text>
<text x="38" y="711" text-anchor="end" fill="#000" stroke="#000" stroke-width="0.2" font-size="11" >0,02</text>
<text x="8" y="575" text-anchor="start" fill="#000" stroke="#000" stroke-width="0.2" font-size="11"  textLength="19" lengthAdjust="spacingAndGlyphs">[%]</text>
<polyline points="50.00,623.00 100.00,626.00 150.00,629.60 185.00,629.60 200.00,627.00 225.00,618.50 240.00,613.50 255.00,613.50 268.00,618.00 275.00,621.50 280.00,626.00 290.00,626.00 300.00,619.50 305.00,618.50 310.00,619.00 320.00,622.00 330.00,625.00 337.00,626.00 342.00,623.50 348.00,618.00 355.00,612.00 361.00,607.00 367.00,604.50 372.00,605.00 380.00,609.00 385.00,614.00 390.00,617.50 393.00,617.00 396.00,613.00 398.00,612.00 402.00,617.00 405.00,622.00 410.00,625.00 415.00,629.00 420.00,632.00 423.00,635.00 426.00,640.00 429.00,650.00 431.00,665.00 433.00,665.00 435.00,650.00 437.00,630.00 440.00,619.00 443.00,618.50 446.00,622.00 450.00,622.50 452.00,626.00 454.00,633.00 456.00,641.00 458.00,642.00 460.00,635.00 462.00,631.00 464.00,634.00 466.00,643.00 467.00,645.00 469.00,638.00 472.00,638.00 475.00,640.00 477.00,648.00 479.00,655.00 481.00,657.00 483.00,665.00 484.00,664.00 487.00,656.00 490.00,660.00 494.00,663.00 498.00,664.00 501.00,662.00 504.00,658.00 506.00,663.00 509.00,667.00 512.00,665.00 514.00,663.00 516.00,660.00 519.00,652.00 520.00,672.00 522.00,660.00 524.00,663.00 526.00,677.00 527.00,673.00 529.00,678.00 531.00,685.00" fill="none" stroke="#FF0000" stroke-width="1.3" stroke-linejoin="round" shape-rendering="crispEdges"/>
<polyline points="50.00,644.50 100.00,643.50 150.00,639.90 175.00,636.00 200.00,631.00 225.00,624.00 240.00,621.00 255.00,621.50 270.00,626.50 280.00,630.50 290.00,630.50 300.00,626.00 310.00,622.00 320.00,614.00 330.00,612.50 340.00,616.00 348.00,619.50 355.00,618.00 362.00,614.50 368.00,616.00 372.00,619.00 378.00,619.00 385.00,614.00 390.00,614.00 398.00,611.00 403.00,609.50 405.00,610.00 408.00,615.00 410.00,625.00 412.00,635.00 415.00,645.00 417.00,645.00 420.00,639.50 423.00,640.00 425.00,645.00 428.00,652.00 430.00,652.50 433.00,648.00 437.00,651.00 440.00,660.00 443.00,675.00 445.00,678.00 448.00,669.00 451.00,671.00 454.00,685.00 456.00,697.00 458.00,702.00 460.00,697.00 462.00,695.00 464.00,702.00 466.00,690.00 468.00,685.00 470.00,700.00 472.00,703.00 474.00,690.00 476.00,675.00 478.00,679.00 482.00,677.00 487.00,677.00 490.00,682.00 492.00,695.00 494.00,708.00" fill="none" stroke="#0000FF" stroke-width="1.3" stroke-linejoin="round" shape-rendering="crispEdges"/>
<rect x="477" y="565" width="50" height="16" fill="#FFFFFF" />
<text x="523.5" y="579" text-anchor="end" fill="#000" stroke="#000" stroke-width="0.2" font-size="11"  textLength="46" lengthAdjust="spacingAndGlyphs">Distortion</text>
<rect x="531" y="565" width="15" height="16" fill="#FFFFFF" />
<text x="545" y="579" text-anchor="end" fill="#FF0000" stroke="#FF0000" stroke-width="0.2" font-size="11"  textLength="13.5" lengthAdjust="spacingAndGlyphs">#2</text>
<rect x="548" y="565" width="16" height="16" fill="#FFFFFF" />
<text x="563" y="579" text-anchor="end" fill="#0000FF" stroke="#0000FF" stroke-width="0.2" font-size="11"  textLength="13.5" lengthAdjust="spacingAndGlyphs">#3</text>
<rect x="638" y="213" width="1" height="151" fill="#000"/>
<rect x="638" y="213" width="183" height="1" fill="#000"/>
<rect x="638" y="358" width="183" height="1" fill="#000"/>
<rect x="820" y="213" width="1" height="151" fill="#000"/>
<rect x="632" y="220" width="6" height="1" fill="#000"/>
<rect x="632" y="231" width="6" height="1" fill="#000"/>
<rect x="632" y="241" width="6" height="1" fill="#000"/>
<rect x="632" y="252" width="6" height="1" fill="#000"/>
<rect x="632" y="263" width="6" height="1" fill="#000"/>
<rect x="632" y="274" width="6" height="1" fill="#000"/>
<rect x="632" y="285" width="6" height="1" fill="#000"/>
<rect x="632" y="296" width="6" height="1" fill="#000"/>
<rect x="632" y="307" width="6" height="1" fill="#000"/>
<rect x="632" y="317" width="6" height="1" fill="#000"/>
<rect x="632" y="328" width="6" height="1" fill="#000"/>
<rect x="632" y="339" width="6" height="1" fill="#000"/>
<rect x="632" y="350" width="6" height="1" fill="#000"/>
<rect x="632" y="213" width="6" height="1" fill="#000"/>
<text x="627" y="225" text-anchor="end" fill="#000" stroke="#000" stroke-width="0.2" font-size="11" >0,02</text>
<text x="627" y="236" text-anchor="end" fill="#000" stroke="#000" stroke-width="0.2" font-size="11" >0,01</text>
<text x="627" y="246" text-anchor="end" fill="#000" stroke="#000" stroke-width="0.2" font-size="11" >0</text>
<text x="627" y="257" text-anchor="end" fill="#000" stroke="#000" stroke-width="0.2" font-size="11" >-0,01</text>
<text x="627" y="268" text-anchor="end" fill="#000" stroke="#000" stroke-width="0.2" font-size="11" >-0,02</text>
<text x="627" y="279" text-anchor="end" fill="#000" stroke="#000" stroke-width="0.2" font-size="11" >-0,03</text>
<text x="627" y="290" text-anchor="end" fill="#000" stroke="#000" stroke-width="0.2" font-size="11" >-0,04</text>
<text x="627" y="301" text-anchor="end" fill="#000" stroke="#000" stroke-width="0.2" font-size="11" >-0,05</text>
<text x="627" y="312" text-anchor="end" fill="#000" stroke="#000" stroke-width="0.2" font-size="11" >-0,06</text>
<text x="627" y="322" text-anchor="end" fill="#000" stroke="#000" stroke-width="0.2" font-size="11" >-0,07</text>
<text x="627" y="333" text-anchor="end" fill="#000" stroke="#000" stroke-width="0.2" font-size="11" >-0,08</text>
<text x="627" y="344" text-anchor="end" fill="#000" stroke="#000" stroke-width="0.2" font-size="11" >-0,09</text>
<text x="627" y="355" text-anchor="end" fill="#000" stroke="#000" stroke-width="0.2" font-size="11" >-0,1</text>
<rect x="669" y="359" width="1" height="5" fill="#000"/>
<rect x="700" y="359" width="1" height="5" fill="#000"/>
<rect x="731" y="359" width="1" height="5" fill="#000"/>
<rect x="761" y="359" width="1" height="5" fill="#000"/>
<rect x="792" y="359" width="1" height="5" fill="#000"/>
<text x="668.5" y="375" text-anchor="middle" fill="#000" stroke="#000" stroke-width="0.2" font-size="11" >0,5</text>
<text x="699.5" y="375" text-anchor="middle" fill="#000" stroke="#000" stroke-width="0.2" font-size="11" >1</text>
<text x="730.5" y="375" text-anchor="middle" fill="#000" stroke="#000" stroke-width="0.2" font-size="11" >1,5</text>
<text x="760.5" y="375" text-anchor="middle" fill="#000" stroke="#000" stroke-width="0.2" font-size="11" >2</text>
<text x="821" y="375" text-anchor="end" fill="#000" stroke="#000" stroke-width="0.2" font-size="11"  textLength="21" lengthAdjust="spacingAndGlyphs">[ms]</text>
<polyline points="638.00,242.00 645.00,242.50 660.00,243.00 672.00,242.50 685.00,242.00 690.00,242.50 695.00,242.00 700.00,241.50 700.50,260.00 701.00,300.00 701.50,320.00 702.00,354.00 702.50,330.00 703.00,290.00 703.50,250.00 704.50,222.00 705.50,238.00 706.50,222.00 707.50,236.00 708.50,222.00 710.50,252.00 712.00,260.50 713.00,222.00 714.50,232.00 715.50,222.00 719.00,243.00 722.70,247.40 725.00,226.00 729.60,245.30 732.50,244.00 734.20,233.00 736.80,243.20 741.40,236.40 742.70,242.00 744.80,239.40 749.90,240.60 753.30,243.20 756.60,244.00 760.00,240.20 763.40,242.80 765.00,240.30 767.90,239.60 770.70,240.30 773.60,241.70 777.50,242.50 779.30,241.00 783.90,242.50 785.70,240.30 789.60,240.30 791.40,242.10 794.90,242.10 796.70,240.30 799.90,242.10 802.10,243.90 803.80,246.40 805.30,248.20 806.30,245.00 809.20,243.90 811.00,246.00 812.80,242.50 814.90,242.10 816.30,238.50 818.10,240.30 819.90,239.60" fill="none" stroke="#000" stroke-width="1" stroke-linejoin="round" shape-rendering="crispEdges"/>
<rect x="701" y="219" width="117" height="11" fill="#FFFFFF" />
<text x="816.5" y="228" text-anchor="end" fill="#000" stroke="#000" stroke-width="0.2" font-size="11"  textLength="114" lengthAdjust="spacingAndGlyphs">Gated impulse response</text>
<rect x="638" y="382" width="1" height="151" fill="#000"/>
<rect x="638" y="382" width="183" height="1" fill="#000"/>
<rect x="638" y="527" width="183" height="1" fill="#000"/>
<rect x="820" y="382" width="1" height="151" fill="#000"/>
<rect x="632" y="389" width="6" height="1" fill="#000"/>
<rect x="632" y="408" width="6" height="1" fill="#000"/>
<rect x="632" y="427" width="6" height="1" fill="#000"/>
<rect x="632" y="446" width="6" height="1" fill="#000"/>
<rect x="632" y="465" width="6" height="1" fill="#000"/>
<rect x="632" y="484" width="6" height="1" fill="#000"/>
<rect x="632" y="503" width="6" height="1" fill="#000"/>
<rect x="632" y="522" width="6" height="1" fill="#000"/>
<rect x="632" y="382" width="6" height="1" fill="#000"/>
<text x="627" y="394" text-anchor="end" fill="#000" stroke="#000" stroke-width="0.2" font-size="11" >0,001</text>
<text x="627" y="413" text-anchor="end" fill="#000" stroke="#000" stroke-width="0.2" font-size="11" >0,0008</text>
<text x="627" y="432" text-anchor="end" fill="#000" stroke="#000" stroke-width="0.2" font-size="11" >0,0006</text>
<text x="627" y="451" text-anchor="end" fill="#000" stroke="#000" stroke-width="0.2" font-size="11" >0,0004</text>
<text x="627" y="470" text-anchor="end" fill="#000" stroke="#000" stroke-width="0.2" font-size="11" >0,0002</text>
<text x="627" y="489" text-anchor="end" fill="#000" stroke="#000" stroke-width="0.2" font-size="11" >0</text>
<text x="627" y="508" text-anchor="end" fill="#000" stroke="#000" stroke-width="0.2" font-size="11" >-0,0002</text>
<rect x="663" y="528" width="1" height="5" fill="#000"/>
<rect x="688" y="528" width="1" height="5" fill="#000"/>
<rect x="712" y="528" width="1" height="5" fill="#000"/>
<rect x="737" y="528" width="1" height="5" fill="#000"/>
<rect x="762" y="528" width="1" height="5" fill="#000"/>
<rect x="787" y="528" width="1" height="5" fill="#000"/>
<rect x="811" y="528" width="1" height="5" fill="#000"/>
<text x="662.5" y="544" text-anchor="middle" fill="#000" stroke="#000" stroke-width="0.2" font-size="11" >0,2</text>
<text x="687.5" y="544" text-anchor="middle" fill="#000" stroke="#000" stroke-width="0.2" font-size="11" >0,4</text>
<text x="711.5" y="544" text-anchor="middle" fill="#000" stroke="#000" stroke-width="0.2" font-size="11" >0,6</text>
<text x="736.5" y="544" text-anchor="middle" fill="#000" stroke="#000" stroke-width="0.2" font-size="11" >0,8</text>
<text x="761.5" y="544" text-anchor="middle" fill="#000" stroke="#000" stroke-width="0.2" font-size="11" >1</text>
<text x="786.5" y="544" text-anchor="middle" fill="#000" stroke="#000" stroke-width="0.2" font-size="11" >1,2</text>
<text x="821" y="544" text-anchor="end" fill="#000" stroke="#000" stroke-width="0.2" font-size="11"  textLength="21" lengthAdjust="spacingAndGlyphs">[ms]</text>
<polyline points="638.50,482.50 646.10,482.50 647.40,484.40 651.60,484.40 652.50,483.40 653.30,484.40 657.60,484.40 660.50,482.50 662.60,482.50 663.50,483.50 664.70,482.50 667.30,482.50 668.50,483.40 673.60,483.40 674.90,484.40 676.60,484.40 678.30,486.30 680.80,486.30 681.60,487.50 689.70,487.50 691.40,487.30 694.30,490.30 696.70,497.00 698.50,508.00 700.30,523.20 701.50,513.00 702.20,497.00 703.40,457.00 704.60,420.00 705.50,386.00 706.50,386.00 708.20,440.00 708.80,452.00 710.00,462.00 713.00,475.00 714.30,487.40 715.50,513.00 718.60,496.00 721.60,483.00 724.60,495.00 728.30,476.50 730.00,480.00 732.50,510.00 734.30,511.00 736.80,494.70 738.00,488.60 739.20,488.60 741.60,499.00 743.50,496.00 745.90,471.00 747.10,472.80 749.50,491.60 753.20,494.00 755.60,489.80 758.70,485.60 761.20,485.50 763.10,476.30 764.60,475.50 766.20,481.00 768.10,487.50 770.40,485.20 772.00,478.60 774.70,480.50 776.60,479.80 778.90,473.60 780.90,476.30 783.20,480.50 785.50,477.40 788.60,476.70 790.90,478.60 793.20,481.30 795.90,477.40 799.00,482.00 801.30,482.80 804.80,480.50 807.10,483.20 810.20,483.60 813.70,480.50 817.20,481.30 819.90,480.50" fill="none" stroke="#FF0000" stroke-width="1" stroke-linejoin="round" shape-rendering="crispEdges"/>
<rect x="684" y="387" width="134" height="12" fill="#FFFFFF" />
<text x="816.5" y="397" text-anchor="end" fill="#FF0000" stroke="#FF0000" stroke-width="0.2" font-size="11"  textLength="131" lengthAdjust="spacingAndGlyphs">Gated impulse response #2</text>
<rect x="638" y="551" width="1" height="151" fill="#000"/>
<rect x="638" y="551" width="183" height="1" fill="#000"/>
<rect x="638" y="696" width="183" height="1" fill="#000"/>
<rect x="820" y="551" width="1" height="151" fill="#000"/>
<rect x="632" y="573" width="6" height="1" fill="#000"/>
<rect x="632" y="590" width="6" height="1" fill="#000"/>
<rect x="632" y="606" width="6" height="1" fill="#000"/>
<rect x="632" y="623" width="6" height="1" fill="#000"/>
<rect x="632" y="640" width="6" height="1" fill="#000"/>
<rect x="632" y="656" width="6" height="1" fill="#000"/>
<rect x="632" y="673" width="6" height="1" fill="#000"/>
<rect x="632" y="690" width="6" height="1" fill="#000"/>
<rect x="632" y="556" width="6" height="1" fill="#000"/>
<rect x="632" y="551" width="6" height="1" fill="#000"/>
<text x="627" y="578" text-anchor="end" fill="#000" stroke="#000" stroke-width="0.2" font-size="11" >0,001</text>
<text x="627" y="595" text-anchor="end" fill="#000" stroke="#000" stroke-width="0.2" font-size="11" >0,0008</text>
<text x="627" y="611" text-anchor="end" fill="#000" stroke="#000" stroke-width="0.2" font-size="11" >0,0006</text>
<text x="627" y="628" text-anchor="end" fill="#000" stroke="#000" stroke-width="0.2" font-size="11" >0,0004</text>
<text x="627" y="645" text-anchor="end" fill="#000" stroke="#000" stroke-width="0.2" font-size="11" >0,0002</text>
<text x="627" y="661" text-anchor="end" fill="#000" stroke="#000" stroke-width="0.2" font-size="11" >0</text>
<text x="627" y="678" text-anchor="end" fill="#000" stroke="#000" stroke-width="0.2" font-size="11" >-0,0002</text>
<text x="627" y="695" text-anchor="end" fill="#000" stroke="#000" stroke-width="0.2" font-size="11" >-0,0004</text>
<rect x="676" y="697" width="1" height="5" fill="#000"/>
<rect x="713" y="697" width="1" height="5" fill="#000"/>
<rect x="751" y="697" width="1" height="5" fill="#000"/>
<rect x="788" y="697" width="1" height="5" fill="#000"/>
<text x="675.5" y="713" text-anchor="middle" fill="#000" stroke="#000" stroke-width="0.2" font-size="11" >0,2</text>
<text x="712.5" y="713" text-anchor="middle" fill="#000" stroke="#000" stroke-width="0.2" font-size="11" >0,4</text>
<text x="750.5" y="713" text-anchor="middle" fill="#000" stroke="#000" stroke-width="0.2" font-size="11" >0,6</text>
<text x="787.5" y="713" text-anchor="middle" fill="#000" stroke="#000" stroke-width="0.2" font-size="11" >0,8</text>
<text x="821" y="713" text-anchor="end" fill="#000" stroke="#000" stroke-width="0.2" font-size="11"  textLength="21" lengthAdjust="spacingAndGlyphs">[ms]</text>
<polyline points="638.00,655.00 645.00,655.30 652.00,654.60 660.00,655.50 668.00,654.80 676.00,655.40 684.00,654.70 690.00,655.30 695.40,655.30 697.40,662.00 698.80,670.20 699.40,681.00 701.50,692.40 702.80,664.80 703.50,641.20 704.60,612.00 705.50,555.00 706.50,555.00 708.50,568.00 710.20,614.80 710.90,637.80 712.30,657.40 712.90,670.20 714.30,678.30 718.30,672.90 722.40,674.90 726.40,682.30 729.10,671.50 731.20,651.30 734.50,636.40 736.60,643.20 739.90,666.10 744.70,655.30 747.40,658.00 752.10,673.50 756.10,656.70 758.80,650.00 760.00,651.60 762.40,655.20 764.50,652.40 768.10,642.30 769.70,643.10 772.20,650.80 775.00,657.70 779.40,660.10 783.50,656.90 787.60,651.20 792.40,653.20 796.90,649.60 800.10,658.90 803.40,661.30 808.60,652.40 814.30,659.30 819.60,651.20" fill="none" stroke="#0000FF" stroke-width="1" stroke-linejoin="round" shape-rendering="crispEdges"/>
<rect x="684" y="556" width="134" height="12" fill="#FFFFFF" />
<text x="816.5" y="566" text-anchor="end" fill="#0000FF" stroke="#0000FF" stroke-width="0.2" font-size="11"  textLength="131" lengthAdjust="spacingAndGlyphs">Gated impulse response #3</text>
</svg></body></html>
